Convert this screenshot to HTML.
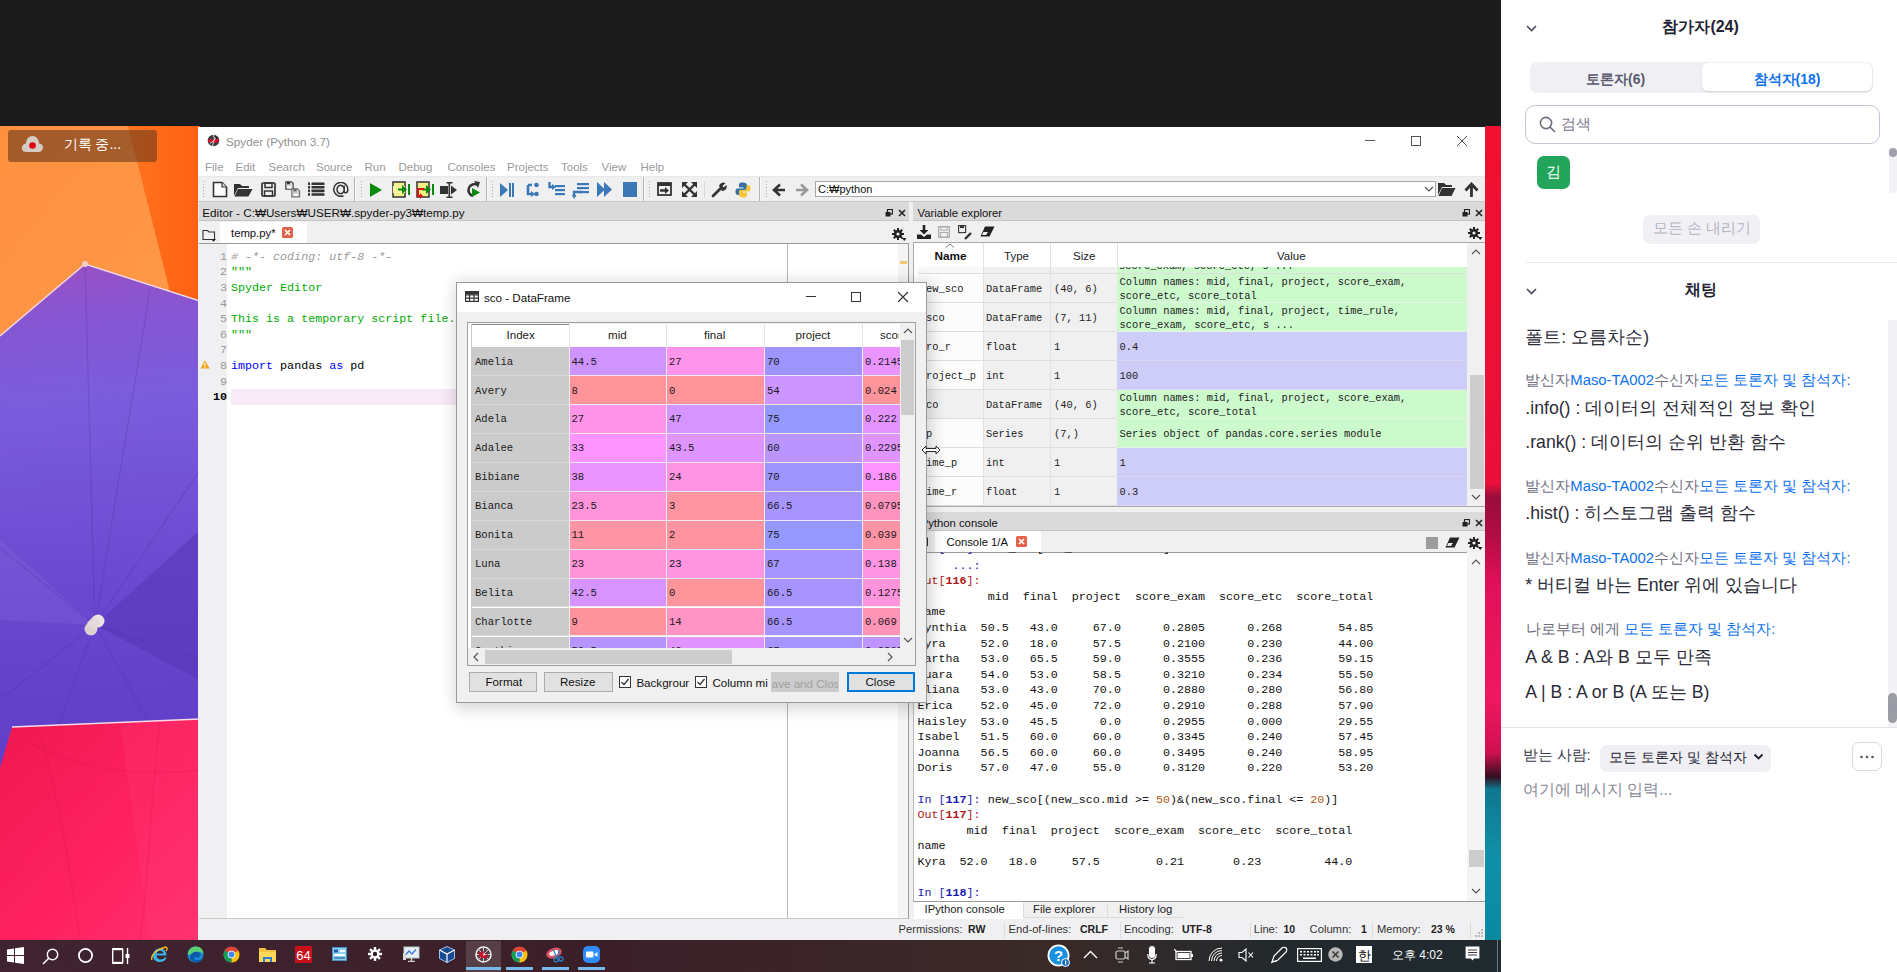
<!DOCTYPE html>
<html><head><meta charset="utf-8">
<style>
*{margin:0;padding:0;box-sizing:border-box}
html,body{width:1897px;height:972px;overflow:hidden;background:#1b1b1b;font-family:"Liberation Sans",sans-serif;position:relative}
.a{position:absolute;line-height:1}
.m{font-family:"Liberation Mono",monospace}
.nw{white-space:pre}
</style></head><body>
<svg class="a" style="left:0;top:126px" width="200" height="814" viewBox="0 126 200 814">
  <defs>
    <linearGradient id="og" x1="0" y1="0" x2="0.3" y2="1">
      <stop offset="0" stop-color="#ff9040"/><stop offset="0.5" stop-color="#ff9a48"/><stop offset="1" stop-color="#ff8a30"/>
    </linearGradient>
    <linearGradient id="og2" x1="0" y1="0" x2="1" y2="0">
      <stop offset="0" stop-color="#ff7420"/><stop offset="1" stop-color="#ff6010"/>
    </linearGradient>
    <linearGradient id="pg" gradientUnits="userSpaceOnUse" x1="0" y1="264" x2="40" y2="740">
      <stop offset="0" stop-color="#9a50c4"/><stop offset="0.13" stop-color="#8656d4"/><stop offset="0.3" stop-color="#7a5ddc"/><stop offset="0.7" stop-color="#6a48d0"/><stop offset="1" stop-color="#6040c8"/>
    </linearGradient>
    <linearGradient id="rg" x1="0" y1="0" x2="1" y2="1">
      <stop offset="0" stop-color="#f01850"/><stop offset="0.6" stop-color="#ff2262"/><stop offset="1" stop-color="#ff3070"/>
    </linearGradient>
  </defs>
  <rect x="0" y="126" width="200" height="814" fill="url(#og)"/>
  <polygon points="128,126 200,126 200,302 172,300" fill="url(#og2)"/>
  <polygon points="0,336 85,264 200,301 200,940 0,940" fill="url(#pg)"/>
  
  <polygon points="200,530 95,625 200,680" fill="#5232b0" opacity="0.45"/>
  <polygon points="0,620 95,625 0,540" fill="#8a70e0" opacity="0.25"/>
  <g stroke="#4a2aa0" stroke-width="1.3" fill="none" opacity="0.22">
    <path d="M95,625 L85,264"/><path d="M95,625 L0,548"/><path d="M95,625 L0,700"/><path d="M95,625 L55,735"/>
    <path d="M95,625 L150,725"/><path d="M95,625 L200,660"/><path d="M95,625 L200,470"/><path d="M95,625 L150,290"/>
  </g>
  <polygon points="0,768 12,727 200,719 200,940 0,940" fill="url(#rg)"/>
  <polygon points="120,722 200,719 200,940 150,940" fill="#ff3a78" opacity="0.25"/>
  <g stroke="#c01040" stroke-width="1.5" fill="none" opacity="0.15">
    <path d="M40,735 C60,800 70,870 80,940"/><path d="M160,722 C150,800 150,870 140,940"/><path d="M12,727 C40,760 120,780 200,770"/>
  </g>
  <polyline points="12,727 200,719" stroke="#f4dce8" stroke-width="1.6" fill="none"/>
  <polyline points="0,336 85,264 200,301" stroke="#f0d8e8" stroke-width="1.4" fill="none"/>
  <circle cx="91" cy="629" r="6.5" fill="#ddd2d2"/><circle cx="98" cy="621" r="6.5" fill="#ece4e4"/><rect x="89" y="618" width="10" height="10" fill="#e4dada" transform="rotate(45 94 623)"/>
  <circle cx="85" cy="264" r="3" fill="#e8d0c8"/>
</svg>
<div class="a" style="left:1485px;top:126px;width:16px;height:814px;background:linear-gradient(#f01030 0%,#e8103a 44%,#9a0c3c 45.5%,#b00c44 50%,#e01058 56%,#f01860 70%,#d01050 77%,#301020 80%,#107890 81.5%,#1090a8 90%,#0a88a0 100%);"></div>
<div class="a" style="left:8.4px;top:130.3px;width:148.2px;height:32px;background:rgba(110,60,30,0.62);border-radius:3px"></div>
<div class="a" style="left:0px;top:940px;width:1501px;height:32px;background:linear-gradient(90deg,#3f2330 0%,#3b1f28 40%,#3a2a28 70%,#23292d 85%,#1f2a30 100%);"></div>
<div class="a" style="left:1501px;top:0px;width:396px;height:972px;background:#fff;"></div>
<div class="a" style="left:198px;top:127px;width:1287px;height:813px;background:#f0f0f0;"></div>
<div class="a" style="left:198px;top:127px;width:1287px;height:49px;background:#fff;"></div>
<svg class="a" style="left:207px;top:134px" width="13" height="13" viewBox="0 0 13 13"><circle cx="6.5" cy="6.5" r="5.8" fill="#3c3c3c"/>
 <path d="M0.8,5.8 C3,4.6 5,5.4 7,5 C9,4.6 10.5,4.2 12.2,5.8 L11.5,8 C9.5,8.8 7.5,9.4 5.5,8.6 C3.5,8 2,8.6 1,8.2 Z" fill="#d0102a"/>
 <path d="M6.5,1 L7.5,6 M9.5,2.5 L7,6.5 M7,6.5 L5.5,12 M7,6.5 L3,9.5" stroke="#e8e8e8" stroke-width="0.9"/>
 <path d="M8,1.5 L11,3.5 L9,5 Z" fill="#111"/></svg>
<div class="a nw" style="left:226px;top:136px;font-size:11.7px;color:#909090;">Spyder (Python 3.7)</div>
<div class="a" style="left:1365px;top:140px;width:10px;height:1px;background:#555;"></div>
<div class="a" style="left:1411px;top:136px;width:10px;height:10px;background:transparent;border:1px solid #555"></div>
<svg class="a" style="left:1456px;top:135px" width="12" height="12" viewBox="0 0 12 12"><path d="M1,1 L11,11 M11,1 L1,11" stroke="#555" stroke-width="1"/></svg>
<div class="a nw" style="left:205px;top:162px;font-size:11.5px;color:#9a9a9a;">File</div>
<div class="a nw" style="left:235.5px;top:162px;font-size:11.5px;color:#9a9a9a;">Edit</div>
<div class="a nw" style="left:268.5px;top:162px;font-size:11.5px;color:#9a9a9a;">Search</div>
<div class="a nw" style="left:316px;top:162px;font-size:11.5px;color:#9a9a9a;">Source</div>
<div class="a nw" style="left:364.5px;top:162px;font-size:11.5px;color:#9a9a9a;">Run</div>
<div class="a nw" style="left:398.5px;top:162px;font-size:11.5px;color:#9a9a9a;">Debug</div>
<div class="a nw" style="left:447.5px;top:162px;font-size:11.5px;color:#9a9a9a;">Consoles</div>
<div class="a nw" style="left:507px;top:162px;font-size:11.5px;color:#9a9a9a;">Projects</div>
<div class="a nw" style="left:561px;top:162px;font-size:11.5px;color:#9a9a9a;">Tools</div>
<div class="a nw" style="left:601.5px;top:162px;font-size:11.5px;color:#9a9a9a;">View</div>
<div class="a nw" style="left:640.5px;top:162px;font-size:11.5px;color:#9a9a9a;">Help</div>
<div class="a" style="left:198px;top:176px;width:1287px;height:26px;background:#f0f0f0;border-top:1px solid #e8e8e8"></div>
<div class="a" style="left:198px;top:201px;width:1287px;height:1px;background:#c8c8c8;"></div>
<svg class="a" style="left:202px;top:181px" width="3" height="18" viewBox="0 0 3 18"><rect x="1" y="0" width="1" height="1" fill="#aaa"/><rect x="1" y="3" width="1" height="1" fill="#aaa"/><rect x="1" y="6" width="1" height="1" fill="#aaa"/><rect x="1" y="9" width="1" height="1" fill="#aaa"/><rect x="1" y="12" width="1" height="1" fill="#aaa"/><rect x="1" y="15" width="1" height="1" fill="#aaa"/></svg>
<svg class="a" style="left:360px;top:181px" width="3" height="18" viewBox="0 0 3 18"><rect x="1" y="0" width="1" height="1" fill="#aaa"/><rect x="1" y="3" width="1" height="1" fill="#aaa"/><rect x="1" y="6" width="1" height="1" fill="#aaa"/><rect x="1" y="9" width="1" height="1" fill="#aaa"/><rect x="1" y="12" width="1" height="1" fill="#aaa"/><rect x="1" y="15" width="1" height="1" fill="#aaa"/></svg>
<svg class="a" style="left:491px;top:181px" width="3" height="18" viewBox="0 0 3 18"><rect x="1" y="0" width="1" height="1" fill="#aaa"/><rect x="1" y="3" width="1" height="1" fill="#aaa"/><rect x="1" y="6" width="1" height="1" fill="#aaa"/><rect x="1" y="9" width="1" height="1" fill="#aaa"/><rect x="1" y="12" width="1" height="1" fill="#aaa"/><rect x="1" y="15" width="1" height="1" fill="#aaa"/></svg>
<svg class="a" style="left:648px;top:181px" width="3" height="18" viewBox="0 0 3 18"><rect x="1" y="0" width="1" height="1" fill="#aaa"/><rect x="1" y="3" width="1" height="1" fill="#aaa"/><rect x="1" y="6" width="1" height="1" fill="#aaa"/><rect x="1" y="9" width="1" height="1" fill="#aaa"/><rect x="1" y="12" width="1" height="1" fill="#aaa"/><rect x="1" y="15" width="1" height="1" fill="#aaa"/></svg>
<svg class="a" style="left:765px;top:181px" width="3" height="18" viewBox="0 0 3 18"><rect x="1" y="0" width="1" height="1" fill="#aaa"/><rect x="1" y="3" width="1" height="1" fill="#aaa"/><rect x="1" y="6" width="1" height="1" fill="#aaa"/><rect x="1" y="9" width="1" height="1" fill="#aaa"/><rect x="1" y="12" width="1" height="1" fill="#aaa"/><rect x="1" y="15" width="1" height="1" fill="#aaa"/></svg>
<div class="a" style="left:354px;top:177px;width:1px;height:24px;background:#b4b4b4;"></div>
<div class="a" style="left:355px;top:177px;width:1px;height:24px;background:#fafafa;"></div>
<div class="a" style="left:486px;top:177px;width:1px;height:24px;background:#b4b4b4;"></div>
<div class="a" style="left:487px;top:177px;width:1px;height:24px;background:#fafafa;"></div>
<div class="a" style="left:643px;top:177px;width:1px;height:24px;background:#b4b4b4;"></div>
<div class="a" style="left:644px;top:177px;width:1px;height:24px;background:#fafafa;"></div>
<div class="a" style="left:759px;top:177px;width:1px;height:24px;background:#b4b4b4;"></div>
<div class="a" style="left:760px;top:177px;width:1px;height:24px;background:#fafafa;"></div>
<div class="a" style="left:704px;top:182px;width:1px;height:16px;background:#d8d8d8;"></div>
<svg class="a" style="left:212px;top:181px" width="16" height="17" viewBox="0 0 16 17"><path d="M1.5,1.5 H10 L14.5,6 V15.5 H1.5 Z" fill="#fff" stroke="#333" stroke-width="1.6"/><path d="M10,1.5 V6 H14.5" fill="#ddd" stroke="#333" stroke-width="1.2"/></svg>
<svg class="a" style="left:234px;top:183px" width="19" height="14" viewBox="0 0 19 14"><path d="M0,1 H6 L8,3 H15 V5 H4 L0,13 Z" fill="#333"/><path d="M4,6 H18.5 L14.5,13.5 H0.5 Z" fill="#333"/></svg>
<svg class="a" style="left:261px;top:182px" width="15" height="15" viewBox="0 0 15 15"><rect x="1" y="1" width="13" height="13" rx="1" fill="none" stroke="#333" stroke-width="1.7"/><rect x="4" y="1" width="7" height="4.5" fill="none" stroke="#333" stroke-width="1.5"/><rect x="3.5" y="9" width="8" height="5" fill="none" stroke="#333" stroke-width="1.5"/></svg>
<svg class="a" style="left:285px;top:181px" width="16" height="17" viewBox="0 0 16 17"><path d="M0.8,0.8 H6.5 L8.2,2.5 V8.2 H0.8 Z" fill="#ddd" stroke="#444" stroke-width="1.2"/><rect x="2" y="0.8" width="3" height="2.5" fill="#333"/><rect x="2.2" y="5.5" width="4.5" height="2" fill="#fff"/><path d="M6.8,7.8 H12.5 L14.6,9.9 V15.8 H6.8 Z" fill="#ccc" stroke="#777" stroke-width="1.2"/><rect x="8.5" y="7.8" width="3" height="2.5" fill="#666"/><rect x="8.5" y="12.8" width="4.5" height="2" fill="#fff"/></svg>
<svg class="a" style="left:308px;top:182px" width="17" height="15" viewBox="0 0 17 15"><g fill="#333"><rect x="0" y="0.4" width="2" height="2.6"/><rect x="0" y="4" width="2" height="2.6"/><rect x="0" y="7.6" width="2" height="2.6"/><rect x="0" y="11.2" width="2" height="2.6"/><rect x="3.5" y="0.4" width="13" height="2.6" rx="0.6"/><rect x="3.5" y="4" width="13" height="2.6" rx="0.6"/><rect x="3.5" y="7.6" width="13" height="2.6" rx="0.6"/><rect x="3.5" y="11.2" width="13" height="2.6" rx="0.6"/></g></svg>
<svg class="a" style="left:333px;top:182px" width="16" height="15" viewBox="0 0 16 15"><path d="M11.2,7.5 A3.6,4.2 0 1 1 11.2,7.4 M11.2,3.5 V9.5 C11.2,11.5 14.8,11.5 14.8,7.5 A7,7 0 1 0 10.5,13.8" fill="none" stroke="#333" stroke-width="1.5"/></svg>
<svg class="a" style="left:369px;top:182px" width="14" height="16" viewBox="0 0 14 16"><path d="M1,1 L13,8 L1,15 Z" fill="#0a8a0a"/></svg>
<svg class="a" style="left:392px;top:181px" width="19" height="17" viewBox="0 0 19 17"><rect x="1" y="1" width="12" height="15" fill="#f4f08a" stroke="#333" stroke-width="1.5"/><rect x="1" y="5" width="12" height="7" fill="#f8f4a0"/><path d="M10,4 L15,8.5 L10,13 Z" fill="#0a8a0a"/><rect x="16" y="3" width="2" height="11" fill="#0a8a0a"/><path d="M6,8.5 H12" stroke="#0a8a0a" stroke-width="2"/></svg>
<svg class="a" style="left:416px;top:181px" width="19" height="18" viewBox="0 0 19 18"><rect x="1" y="1" width="12" height="15" fill="#f4f08a" stroke="#333" stroke-width="1.5"/><path d="M10,4 L15,8.5 L10,13 Z" fill="#0a8a0a"/><rect x="16" y="3" width="2" height="11" fill="#0a8a0a"/><path d="M6,8.5 H12" stroke="#0a8a0a" stroke-width="2"/><path d="M8,8 H2 V15 H5" stroke="#e01010" stroke-width="2" fill="none"/><path d="M4,12 L7,15 L4,18 Z" fill="#e01010"/></svg>
<svg class="a" style="left:440px;top:182px" width="18" height="16" viewBox="0 0 18 16"><rect x="0" y="4" width="8" height="8" fill="#333"/><rect x="8.5" y="0" width="1.6" height="16" fill="#333"/><rect x="6.5" y="0" width="6" height="1.5" fill="#333"/><rect x="6.5" y="14.5" width="6" height="1.5" fill="#333"/><path d="M11,3.5 L17,8 L11,12.5 Z" fill="#333"/></svg>
<svg class="a" style="left:465px;top:181px" width="16" height="17" viewBox="0 0 16 17"><path d="M12.5,4 A6,6 0 1 0 8,15" fill="none" stroke="#333" stroke-width="2.4"/><path d="M9,0 L15,1 L13,7 Z" fill="#333"/><path d="M7,7 L15,11.5 L7,16 Z" fill="#0a8a0a"/></svg>
<svg class="a" style="left:500px;top:182px" width="14" height="16" viewBox="0 0 14 16"><path d="M0,1 L8,8 L0,15 Z" fill="#3a78b8"/><rect x="9" y="1" width="2" height="14" fill="#3a78b8"/><rect x="12" y="1" width="2" height="14" fill="#3a78b8"/></svg>
<svg class="a" style="left:526px;top:182px" width="13" height="15" viewBox="0 0 13 15"><path d="M2,3 H6 M2,3 V12 H6" stroke="#3a78b8" stroke-width="2.6" fill="none"/><circle cx="10.5" cy="3" r="2.3" fill="#3a78b8"/><circle cx="10.5" cy="12" r="2.3" fill="#3a78b8"/><path d="M5,9 L9,12 L5,15 Z" fill="#3a78b8"/></svg>
<svg class="a" style="left:548px;top:181px" width="18" height="15" viewBox="0 0 18 15"><path d="M1.5,1 V6 H5" stroke="#3a78b8" stroke-width="2.4" fill="none"/><path d="M4,3 L8,6 L4,9 Z" fill="#3a78b8"/><rect x="7" y="4" width="10" height="2.2" fill="#3a78b8"/><rect x="7" y="8" width="10" height="2.2" fill="#3a78b8"/><rect x="7" y="12" width="10" height="2.2" fill="#3a78b8"/></svg>
<svg class="a" style="left:572px;top:183px" width="18" height="16" viewBox="0 0 18 16"><rect x="5" y="0" width="12" height="2.2" fill="#3a78b8"/><rect x="5" y="4" width="12" height="2.2" fill="#3a78b8"/><rect x="7" y="8" width="10" height="2.2" fill="#3a78b8"/><path d="M10,9 H2 V14" stroke="#3a78b8" stroke-width="2.4" fill="none"/><path d="M0,12 L2,16 L4.5,12 Z" fill="#3a78b8"/></svg>
<svg class="a" style="left:597px;top:182px" width="16" height="15" viewBox="0 0 16 15"><path d="M0,0 L8,7.5 L0,15 Z M7,0 L15,7.5 L7,15 Z" fill="#3a78b8"/></svg>
<div class="a" style="left:623px;top:182px;width:14px;height:15px;background:#3a78b8;"></div>
<svg class="a" style="left:657px;top:182px" width="15" height="14" viewBox="0 0 15 14"><rect x="1" y="1" width="13" height="12" fill="none" stroke="#333" stroke-width="1.8"/><rect x="1" y="1" width="13" height="3" fill="#333"/><path d="M3,8.5 H9" stroke="#333" stroke-width="2.5"/><path d="M8,5 L12,8.5 L8,12 Z" fill="#333"/></svg>
<svg class="a" style="left:682px;top:182px" width="15" height="15" viewBox="0 0 15 15"><path d="M2,2 L13,13 M13,2 L2,13" stroke="#333" stroke-width="2.4"/><path d="M0,0 H6 L0,6 Z M15,0 H9 L15,6 Z M0,15 H6 L0,9 Z M15,15 H9 L15,9 Z" fill="#333"/></svg>
<svg class="a" style="left:711px;top:182px" width="16" height="16" viewBox="0 0 16 16"><path d="M2,14 L9,7" stroke="#333" stroke-width="2.8" stroke-linecap="round"/><path d="M8,4 A4.5,4.5 0 0 1 14.5,1 L11.5,4 L12.5,5.5 L15.5,3 A4.5,4.5 0 0 1 11,9 Z" fill="#333"/></svg>
<svg class="a" style="left:735px;top:182px" width="16" height="16" viewBox="0 0 16 16"><path d="M8,0.5 C4,0.5 4,2 4,3.5 V5.5 H8.5 V6.5 H2.5 C0.5,6.5 0.5,9 0.5,10 C0.5,12 1.5,13 3,13 H4.5 V10.5 C4.5,9 5.5,8 7,8 H10.5 C11.5,8 12,7.5 12,6.5 V3 C12,1.5 10.5,0.5 8,0.5 Z" fill="#3572a5"/><path d="M8,15.5 C12,15.5 12,14 12,12.5 V10.5 H7.5 V9.5 H13.5 C15.5,9.5 15.5,7 15.5,6 C15.5,4 14.5,3 13,3 H11.5 V5.5 C11.5,7 10.5,8 9,8 H5.5 C4.5,8 4,8.5 4,9.5 V13 C4,14.5 5.5,15.5 8,15.5 Z" fill="#f4c430"/></svg>
<svg class="a" style="left:772px;top:183px" width="14" height="14" viewBox="0 0 14 14"><path d="M13,7 H3 M8,1.5 L2,7 L8,12.5" stroke="#333" stroke-width="2.6" fill="none"/></svg>
<svg class="a" style="left:795px;top:183px" width="14" height="14" viewBox="0 0 14 14"><path d="M1,7 H11 M6,1.5 L12,7 L6,12.5" stroke="#999" stroke-width="2.6" fill="none"/></svg>
<div class="a" style="left:815px;top:181px;width:621px;height:16px;background:#fff;border:1px solid #a8a8a8"></div>
<div class="a nw" style="left:818px;top:183.5px;font-size:11px;color:#111;">C:₩python</div>
<svg class="a" style="left:1424px;top:185px" width="10" height="8" viewBox="0 0 10 8"><path d="M1,2 L5,6 L9,2" stroke="#555" stroke-width="1.2" fill="none"/></svg>
<svg class="a" style="left:1438px;top:182px" width="18" height="15" viewBox="0 0 18 15"><path d="M0,1 H6 L8,3 H14 V5 H4 L0,13 Z" fill="#333"/><path d="M4,6 H17.5 L13.5,14 H0.5 Z" fill="#333"/></svg>
<svg class="a" style="left:1464px;top:182px" width="15" height="15" viewBox="0 0 15 15"><path d="M7.5,15 V3 M1.5,8.5 L7.5,2 L13.5,8.5" stroke="#333" stroke-width="2.8" fill="none"/></svg>
<div class="a" style="left:199px;top:202px;width:710px;height:19px;background:#dadada;border-bottom:1px solid #c4c4c4"></div>
<div class="a nw" style="left:202.3px;top:207px;font-size:11.7px;color:#111;">Editor - C:₩Users₩USER₩.spyder-py3₩temp.py</div>
<svg class="a" style="left:885px;top:209px" width="8" height="8" viewBox="0 0 8 8"><rect x="2.5" y="0.5" width="5" height="4.5" fill="none" stroke="#222" stroke-width="1.2"/><rect x="0.5" y="3" width="5" height="4.5" fill="#222"/></svg>
<svg class="a" style="left:898px;top:209px" width="8" height="8" viewBox="0 0 8 8"><path d="M1,1 L7,7 M7,1 L1,7" stroke="#222" stroke-width="1.6"/></svg>
<svg class="a" style="left:202px;top:229px" width="15" height="13" viewBox="0 0 15 13"><path d="M1,1.5 H5.5 L7,3 H12.5 V10.5 H1 Z" fill="none" stroke="#333" stroke-width="1.1"/><path d="M9,10 L14,10 L11.5,12.8 Z" fill="#222"/></svg>
<div class="a" style="left:220px;top:222px;width:87px;height:22px;background:#fff;"></div>
<div class="a nw" style="left:231px;top:228px;font-size:11.3px;color:#111;">temp.py*</div>
<svg class="a" style="left:282px;top:227px" width="11" height="11" viewBox="0 0 11 11"><rect x="0" y="0" width="11" height="11" rx="1.5" fill="#e5604a"/><path d="M3,3 L8,8 M8,3 L3,8" stroke="#fff" stroke-width="1.6"/></svg>
<svg class="a" style="left:891px;top:227px" width="16" height="15" viewBox="0 0 16 15"><g fill="#222"><circle cx="7" cy="7" r="4"/><rect x="6" y="1" width="2" height="12"/><rect x="1" y="6" width="12" height="2"/><rect x="6" y="1" width="2" height="12" transform="rotate(45 7 7)"/><rect x="6" y="1" width="2" height="12" transform="rotate(-45 7 7)"/></g><circle cx="7" cy="7" r="1.6" fill="#f0f0f0"/><path d="M11,11 H15.5 L13.25,14 Z" fill="#111"/></svg>
<div class="a" style="left:199px;top:243px;width:710px;height:1px;background:#9a9a9a;"></div>
<div class="a" style="left:199px;top:244px;width:710px;height:674px;background:#fff;"></div>
<div class="a" style="left:199px;top:244px;width:28px;height:674px;background:#f0eff2;"></div>
<div class="a" style="left:199px;top:918px;width:710px;height:1px;background:#c8c8c8;"></div>
<div class="a" style="left:787px;top:244px;width:1px;height:674px;background:#b8b8b8;"></div>
<div class="a" style="left:898px;top:244px;width:10px;height:674px;background:#f4f4f4;"></div>
<div class="a" style="left:900px;top:261px;width:7px;height:3px;background:#f0c870;"></div>
<div class="a" style="left:908px;top:244px;width:1px;height:675px;background:#9a9a9a;"></div>
<div class="a" style="left:231px;top:389px;width:667px;height:16px;background:#f7ebf5;"></div>
<div class="a nw" style="left:220px;top:251.8px;font-size:11.7px;color:#999;font-family:'Liberation Mono'">1</div>
<div class="a nw" style="left:220px;top:267.40000000000003px;font-size:11.7px;color:#999;font-family:'Liberation Mono'">2</div>
<div class="a nw" style="left:220px;top:283.0px;font-size:11.7px;color:#999;font-family:'Liberation Mono'">3</div>
<div class="a nw" style="left:220px;top:298.6px;font-size:11.7px;color:#999;font-family:'Liberation Mono'">4</div>
<div class="a nw" style="left:220px;top:314.2px;font-size:11.7px;color:#999;font-family:'Liberation Mono'">5</div>
<div class="a nw" style="left:220px;top:329.8px;font-size:11.7px;color:#999;font-family:'Liberation Mono'">6</div>
<div class="a nw" style="left:220px;top:345.4px;font-size:11.7px;color:#999;font-family:'Liberation Mono'">7</div>
<div class="a nw" style="left:220px;top:361.0px;font-size:11.7px;color:#999;font-family:'Liberation Mono'">8</div>
<div class="a nw" style="left:220px;top:376.6px;font-size:11.7px;color:#999;font-family:'Liberation Mono'">9</div>
<div class="a nw" style="left:213px;top:392.20000000000005px;font-size:11.7px;color:#000;font-weight:bold;font-family:'Liberation Mono'">10</div>
<div class="a nw m" style="left:231px;top:251.8px;font-size:11.7px"><i style="color:#999">#&nbsp;-*-&nbsp;coding:&nbsp;utf-8&nbsp;-*-</i></div>
<div class="a nw m" style="left:231px;top:267.40000000000003px;font-size:11.7px"><span style="color:#00aa00">"""</span></div>
<div class="a nw m" style="left:231px;top:283.0px;font-size:11.7px"><span style="color:#00aa00">Spyder Editor</span></div>
<div class="a nw m" style="left:231px;top:314.2px;font-size:11.7px"><span style="color:#00aa00">This is a temporary script file.</span></div>
<div class="a nw m" style="left:231px;top:329.8px;font-size:11.7px"><span style="color:#00aa00">"""</span></div>
<div class="a nw m" style="left:231px;top:361.0px;font-size:11.7px"><span style="color:#0000ff">import</span> pandas <span style="color:#0000ff">as</span> pd</div>
<svg class="a" style="left:200px;top:360px" width="10" height="9" viewBox="0 0 10 9"><path d="M5,0.5 L9.5,8.5 H0.5 Z" fill="#f0a010"/><rect x="4.4" y="3" width="1.2" height="3" fill="#fff"/><rect x="4.4" y="6.6" width="1.2" height="1.2" fill="#fff"/></svg>
<div class="a" style="left:198px;top:919px;width:1287px;height:21px;background:#f0f0f2;"></div>
<div class="a" style="left:913px;top:202px;width:572px;height:19px;background:#dadada;border-bottom:1px solid #c4c4c4"></div>
<div class="a nw" style="left:917.5px;top:207.5px;font-size:11.3px;color:#111;">Variable explorer</div>
<svg class="a" style="left:1462px;top:209px" width="8" height="8" viewBox="0 0 8 8"><rect x="2.5" y="0.5" width="5" height="4.5" fill="none" stroke="#222" stroke-width="1.2"/><rect x="0.5" y="3" width="5" height="4.5" fill="#222"/></svg>
<svg class="a" style="left:1475px;top:209px" width="8" height="8" viewBox="0 0 8 8"><path d="M1,1 L7,7 M7,1 L1,7" stroke="#222" stroke-width="1.6"/></svg>
<svg class="a" style="left:1467px;top:226px" width="16" height="15" viewBox="0 0 16 15"><g fill="#222"><circle cx="7" cy="7" r="4"/><rect x="6" y="1" width="2" height="12"/><rect x="1" y="6" width="12" height="2"/><rect x="6" y="1" width="2" height="12" transform="rotate(45 7 7)"/><rect x="6" y="1" width="2" height="12" transform="rotate(-45 7 7)"/></g><circle cx="7" cy="7" r="1.6" fill="#f0f0f0"/><path d="M11,11 H15.5 L13.25,14 Z" fill="#111"/></svg>
<svg class="a" style="left:917px;top:225px" width="14" height="14" viewBox="0 0 14 14"><path d="M7,0 V7" stroke="#222" stroke-width="2.6"/><path d="M2.5,5 L7,9.5 L11.5,5 Z" fill="#222"/><path d="M0,9.5 H4 L7,12 L10,9.5 H14 V14 H0 Z" fill="#222"/></svg>
<svg class="a" style="left:938px;top:226px" width="12" height="12" viewBox="0 0 12 12"><rect x="0.7" y="0.7" width="10.6" height="10.6" fill="none" stroke="#aaa" stroke-width="1.2"/><rect x="3" y="0.7" width="6" height="3.5" fill="none" stroke="#aaa" stroke-width="1"/><rect x="2.5" y="6.5" width="7" height="4.8" fill="none" stroke="#aaa" stroke-width="1"/></svg>
<svg class="a" style="left:958px;top:225px" width="15" height="15" viewBox="0 0 15 15"><rect x="0.6" y="0.6" width="7" height="7" fill="none" stroke="#333" stroke-width="1.1"/><rect x="2" y="0.6" width="4" height="2.5" fill="#333"/><path d="M7,14 L13,8" stroke="#333" stroke-width="2.4"/></svg>
<svg class="a" style="left:980px;top:226px" width="15" height="11" viewBox="0 0 15 11"><path d="M5,0.5 H14.5 L9.5,10.5 H0.5 Z" fill="#222"/><path d="M3.5,6 H8 L6,9 H2 Z" fill="#f0f0f0"/></svg>
<div class="a" style="left:913px;top:242px;width:572px;height:265px;background:#fff;border:1px solid #a8a8a8"></div>
<div class="a" style="left:918px;top:243px;width:549px;height:24px;background:#fff;"></div>
<div class="a" style="left:983px;top:243px;width:1px;height:263px;background:#e2e2e2;"></div>
<div class="a" style="left:1050px;top:243px;width:1px;height:263px;background:#e2e2e2;"></div>
<div class="a" style="left:1116.5px;top:243px;width:1px;height:24px;background:#e2e2e2;"></div>
<div class="a nw" style="left:934.5px;top:250.5px;font-size:11.8px;color:#111;font-weight:bold">Name</div>
<svg class="a" style="left:945px;top:243px" width="10" height="5" viewBox="0 0 10 5"><path d="M1,4.5 L5,1 L9,4.5" stroke="#777" stroke-width="1" fill="none"/></svg>
<div class="a nw" style="left:1004px;top:250.5px;font-size:11.5px;color:#222;">Type</div>
<div class="a nw" style="left:1073px;top:250.5px;font-size:11.5px;color:#222;">Size</div>
<div class="a nw" style="left:1277px;top:250.5px;font-size:11.5px;color:#222;">Value</div>
<div class="a" style="left:918px;top:267px;width:65px;height:7px;background:#f8f8f8;"></div>
<div class="a" style="left:984px;top:267px;width:66px;height:7px;background:#f0f0f0;"></div>
<div class="a" style="left:1051px;top:267px;width:66px;height:7px;background:#f0f0f0;"></div>
<div class="a" style="left:1117px;top:267px;width:350px;height:7px;background:#ccfacc;"></div>
<div class="a" style="left:1117px;top:267px;width:350px;height:7px;overflow:hidden"><div class="a nw m" style="left:2px;top:-6px;font-size:10.4px;color:#222">score_exam, score_etc, s ...</div></div>
<div class="a" style="left:918px;top:273px;width:549px;height:1px;background:#dedede;"></div>
<div class="a" style="left:918px;top:274px;width:65px;height:29px;background:#fcfcfc;"></div>
<div class="a" style="left:984px;top:274px;width:66px;height:29px;background:#f0f0f0;"></div>
<div class="a" style="left:1051px;top:274px;width:66px;height:29px;background:#f0f0f0;"></div>
<div class="a" style="left:1117px;top:274px;width:350px;height:29px;background:#ccfacc;"></div>
<div class="a" style="left:918px;top:302px;width:549px;height:1px;background:#dedede;"></div>
<div class="a" style="left:1117px;top:302px;width:350px;height:1px;background:#e4f6e4;"></div>
<div class="a nw" style="left:926px;top:283.5px;font-size:10.4px;color:#222;font-family:'Liberation Mono'">ew_sco</div>
<div class="a nw" style="left:986px;top:283.5px;font-size:10.4px;color:#222;font-family:'Liberation Mono'">DataFrame</div>
<div class="a nw" style="left:1054px;top:283.5px;font-size:10.4px;color:#222;font-family:'Liberation Mono'">(40, 6)</div>
<div class="a nw" style="left:1119.5px;top:277px;font-size:10.4px;color:#222;font-family:'Liberation Mono'">Column names: mid, final, project, score_exam,</div>
<div class="a nw" style="left:1119.5px;top:291.2px;font-size:10.4px;color:#222;font-family:'Liberation Mono'">score_etc, score_total</div>
<div class="a" style="left:918px;top:303px;width:65px;height:29px;background:#fcfcfc;"></div>
<div class="a" style="left:984px;top:303px;width:66px;height:29px;background:#f0f0f0;"></div>
<div class="a" style="left:1051px;top:303px;width:66px;height:29px;background:#f0f0f0;"></div>
<div class="a" style="left:1117px;top:303px;width:350px;height:29px;background:#ccfacc;"></div>
<div class="a" style="left:918px;top:331px;width:549px;height:1px;background:#dedede;"></div>
<div class="a" style="left:1117px;top:331px;width:350px;height:1px;background:#e4f6e4;"></div>
<div class="a nw" style="left:926px;top:312.5px;font-size:10.4px;color:#222;font-family:'Liberation Mono'">sco</div>
<div class="a nw" style="left:986px;top:312.5px;font-size:10.4px;color:#222;font-family:'Liberation Mono'">DataFrame</div>
<div class="a nw" style="left:1054px;top:312.5px;font-size:10.4px;color:#222;font-family:'Liberation Mono'">(7, 11)</div>
<div class="a nw" style="left:1119.5px;top:306px;font-size:10.4px;color:#222;font-family:'Liberation Mono'">Column names: mid, final, project, time_rule,</div>
<div class="a nw" style="left:1119.5px;top:320.2px;font-size:10.4px;color:#222;font-family:'Liberation Mono'">score_exam, score_etc, s ...</div>
<div class="a" style="left:918px;top:332px;width:65px;height:29px;background:#fcfcfc;"></div>
<div class="a" style="left:984px;top:332px;width:66px;height:29px;background:#f0f0f0;"></div>
<div class="a" style="left:1051px;top:332px;width:66px;height:29px;background:#f0f0f0;"></div>
<div class="a" style="left:1117px;top:332px;width:350px;height:29px;background:#cdcdf8;"></div>
<div class="a" style="left:918px;top:360px;width:549px;height:1px;background:#dedede;"></div>
<div class="a" style="left:1117px;top:360px;width:350px;height:1px;background:#d8d8f4;"></div>
<div class="a nw" style="left:926px;top:341.5px;font-size:10.4px;color:#222;font-family:'Liberation Mono'">ro_r</div>
<div class="a nw" style="left:986px;top:341.5px;font-size:10.4px;color:#222;font-family:'Liberation Mono'">float</div>
<div class="a nw" style="left:1054px;top:341.5px;font-size:10.4px;color:#222;font-family:'Liberation Mono'">1</div>
<div class="a nw" style="left:1119.5px;top:341.5px;font-size:10.4px;color:#222;font-family:'Liberation Mono'">0.4</div>
<div class="a" style="left:918px;top:361px;width:65px;height:29px;background:#fcfcfc;"></div>
<div class="a" style="left:984px;top:361px;width:66px;height:29px;background:#f0f0f0;"></div>
<div class="a" style="left:1051px;top:361px;width:66px;height:29px;background:#f0f0f0;"></div>
<div class="a" style="left:1117px;top:361px;width:350px;height:29px;background:#cdcdf8;"></div>
<div class="a" style="left:918px;top:389px;width:549px;height:1px;background:#dedede;"></div>
<div class="a" style="left:1117px;top:389px;width:350px;height:1px;background:#d8d8f4;"></div>
<div class="a nw" style="left:926px;top:370.5px;font-size:10.4px;color:#222;font-family:'Liberation Mono'">roject_p</div>
<div class="a nw" style="left:986px;top:370.5px;font-size:10.4px;color:#222;font-family:'Liberation Mono'">int</div>
<div class="a nw" style="left:1054px;top:370.5px;font-size:10.4px;color:#222;font-family:'Liberation Mono'">1</div>
<div class="a nw" style="left:1119.5px;top:370.5px;font-size:10.4px;color:#222;font-family:'Liberation Mono'">100</div>
<div class="a" style="left:918px;top:390px;width:65px;height:29px;background:#f0f0f0;"></div>
<div class="a" style="left:984px;top:390px;width:66px;height:29px;background:#f0f0f0;"></div>
<div class="a" style="left:1051px;top:390px;width:66px;height:29px;background:#f0f0f0;"></div>
<div class="a" style="left:1117px;top:390px;width:350px;height:29px;background:#ccfacc;"></div>
<div class="a" style="left:918px;top:418px;width:549px;height:1px;background:#dedede;"></div>
<div class="a" style="left:1117px;top:418px;width:350px;height:1px;background:#e4f6e4;"></div>
<div class="a nw" style="left:926px;top:399.5px;font-size:10.4px;color:#222;font-family:'Liberation Mono'">co</div>
<div class="a nw" style="left:986px;top:399.5px;font-size:10.4px;color:#222;font-family:'Liberation Mono'">DataFrame</div>
<div class="a nw" style="left:1054px;top:399.5px;font-size:10.4px;color:#222;font-family:'Liberation Mono'">(40, 6)</div>
<div class="a nw" style="left:1119.5px;top:393px;font-size:10.4px;color:#222;font-family:'Liberation Mono'">Column names: mid, final, project, score_exam,</div>
<div class="a nw" style="left:1119.5px;top:407.2px;font-size:10.4px;color:#222;font-family:'Liberation Mono'">score_etc, score_total</div>
<div class="a" style="left:918px;top:419px;width:65px;height:29px;background:#fcfcfc;"></div>
<div class="a" style="left:984px;top:419px;width:66px;height:29px;background:#f0f0f0;"></div>
<div class="a" style="left:1051px;top:419px;width:66px;height:29px;background:#f0f0f0;"></div>
<div class="a" style="left:1117px;top:419px;width:350px;height:29px;background:#ccfacc;"></div>
<div class="a" style="left:918px;top:447px;width:549px;height:1px;background:#dedede;"></div>
<div class="a" style="left:1117px;top:447px;width:350px;height:1px;background:#e4f6e4;"></div>
<div class="a nw" style="left:926px;top:428.5px;font-size:10.4px;color:#222;font-family:'Liberation Mono'">p</div>
<div class="a nw" style="left:986px;top:428.5px;font-size:10.4px;color:#222;font-family:'Liberation Mono'">Series</div>
<div class="a nw" style="left:1054px;top:428.5px;font-size:10.4px;color:#222;font-family:'Liberation Mono'">(7,)</div>
<div class="a nw" style="left:1119.5px;top:428.5px;font-size:10.4px;color:#222;font-family:'Liberation Mono'">Series object of pandas.core.series module</div>
<div class="a" style="left:918px;top:448px;width:65px;height:29px;background:#fcfcfc;"></div>
<div class="a" style="left:984px;top:448px;width:66px;height:29px;background:#f0f0f0;"></div>
<div class="a" style="left:1051px;top:448px;width:66px;height:29px;background:#f0f0f0;"></div>
<div class="a" style="left:1117px;top:448px;width:350px;height:29px;background:#cdcdf8;"></div>
<div class="a" style="left:918px;top:476px;width:549px;height:1px;background:#dedede;"></div>
<div class="a" style="left:1117px;top:476px;width:350px;height:1px;background:#d8d8f4;"></div>
<div class="a nw" style="left:926px;top:457.5px;font-size:10.4px;color:#222;font-family:'Liberation Mono'">ime_p</div>
<div class="a nw" style="left:986px;top:457.5px;font-size:10.4px;color:#222;font-family:'Liberation Mono'">int</div>
<div class="a nw" style="left:1054px;top:457.5px;font-size:10.4px;color:#222;font-family:'Liberation Mono'">1</div>
<div class="a nw" style="left:1119.5px;top:457.5px;font-size:10.4px;color:#222;font-family:'Liberation Mono'">1</div>
<div class="a" style="left:918px;top:477px;width:65px;height:29px;background:#fcfcfc;"></div>
<div class="a" style="left:984px;top:477px;width:66px;height:29px;background:#f0f0f0;"></div>
<div class="a" style="left:1051px;top:477px;width:66px;height:29px;background:#f0f0f0;"></div>
<div class="a" style="left:1117px;top:477px;width:350px;height:29px;background:#cdcdf8;"></div>
<div class="a" style="left:918px;top:505px;width:549px;height:1px;background:#dedede;"></div>
<div class="a" style="left:1117px;top:505px;width:350px;height:1px;background:#d8d8f4;"></div>
<div class="a nw" style="left:926px;top:486.5px;font-size:10.4px;color:#222;font-family:'Liberation Mono'">ime_r</div>
<div class="a nw" style="left:986px;top:486.5px;font-size:10.4px;color:#222;font-family:'Liberation Mono'">float</div>
<div class="a nw" style="left:1054px;top:486.5px;font-size:10.4px;color:#222;font-family:'Liberation Mono'">1</div>
<div class="a nw" style="left:1119.5px;top:486.5px;font-size:10.4px;color:#222;font-family:'Liberation Mono'">0.3</div>
<div class="a" style="left:1467px;top:243px;width:18px;height:263px;background:#f0f0f0;"></div>
<svg class="a" style="left:1471px;top:248px" width="10" height="7" viewBox="0 0 10 7"><path d="M1,6 L5,2 L9,6" stroke="#555" stroke-width="1.2" fill="none"/></svg>
<div class="a" style="left:1469.5px;top:375px;width:14.5px;height:114px;background:#cdcdcd;"></div>
<svg class="a" style="left:1471px;top:494px" width="10" height="7" viewBox="0 0 10 7"><path d="M1,1 L5,5 L9,1" stroke="#555" stroke-width="1.2" fill="none"/></svg>
<div class="a" style="left:913px;top:512px;width:572px;height:19px;background:#dadada;border-bottom:1px solid #c4c4c4"></div>
<div class="a nw" style="left:917.5px;top:517.5px;font-size:11.3px;color:#111;">IPython console</div>
<svg class="a" style="left:1462px;top:519px" width="8" height="8" viewBox="0 0 8 8"><rect x="2.5" y="0.5" width="5" height="4.5" fill="none" stroke="#222" stroke-width="1.2"/><rect x="0.5" y="3" width="5" height="4.5" fill="#222"/></svg>
<svg class="a" style="left:1475px;top:519px" width="8" height="8" viewBox="0 0 8 8"><path d="M1,1 L7,7 M7,1 L1,7" stroke="#222" stroke-width="1.6"/></svg>
<svg class="a" style="left:915px;top:535px" width="13" height="13" viewBox="0 0 13 13"><path d="M1,1.5 H5.5 L7,3 H12.5 V10.5 H1 Z" fill="none" stroke="#333" stroke-width="1.1"/><path d="M9,10 L13,10 L11,12.8 Z" fill="#222"/></svg>
<div class="a" style="left:935px;top:531px;width:106px;height:21px;background:#fff;"></div>
<div class="a nw" style="left:946.5px;top:537px;font-size:11.3px;color:#111;">Console 1/A</div>
<svg class="a" style="left:1016px;top:536px" width="11" height="11" viewBox="0 0 11 11"><rect x="0" y="0" width="11" height="11" rx="1.5" fill="#e5604a"/><path d="M3,3 L8,8 M8,3 L3,8" stroke="#fff" stroke-width="1.6"/></svg>
<div class="a" style="left:1426px;top:537px;width:11.5px;height:11.5px;background:#9c9c9c;"></div>
<svg class="a" style="left:1445px;top:537px" width="15" height="11" viewBox="0 0 15 11"><path d="M5,0.5 H14.5 L9.5,10.5 H0.5 Z" fill="#222"/><path d="M3.5,6 H8 L6,9 H2 Z" fill="#f0f0f0"/></svg>
<svg class="a" style="left:1467px;top:536px" width="16" height="15" viewBox="0 0 16 15"><g fill="#222"><circle cx="7" cy="7" r="4"/><rect x="6" y="1" width="2" height="12"/><rect x="1" y="6" width="12" height="2"/><rect x="6" y="1" width="2" height="12" transform="rotate(45 7 7)"/><rect x="6" y="1" width="2" height="12" transform="rotate(-45 7 7)"/></g><circle cx="7" cy="7" r="1.6" fill="#f0f0f0"/><path d="M11,11 H15.5 L13.25,14 Z" fill="#111"/></svg>
<div class="a" style="left:913px;top:552px;width:572px;height:350px;background:#fff;border-top:1px solid #9a9a9a;border-bottom:1px solid #9a9a9a;border-left:1px solid #bbb"></div>
<div class="a" style="left:1467px;top:552px;width:18px;height:349px;background:#f4f4f4;"></div>
<svg class="a" style="left:1471px;top:558px" width="10" height="7" viewBox="0 0 10 7"><path d="M1,6 L5,2 L9,6" stroke="#555" stroke-width="1.2" fill="none"/></svg>
<div class="a" style="left:1469px;top:850px;width:15px;height:16.5px;background:#cdcdcd;"></div>
<svg class="a" style="left:1471px;top:888px" width="10" height="7" viewBox="0 0 10 7"><path d="M1,1 L5,5 L9,1" stroke="#555" stroke-width="1.2" fill="none"/></svg>
<div class="a" style="left:914px;top:552px;width:552px;height:6px;overflow:hidden">
<div class="a nw m" style="left:3.5px;top:-8px;font-size:11.7px;color:#111"><span style="color:#1a1ab0">In [<b>116</b>]:</span> new_sco[new_sco.mid &gt;= <span style="color:#b05a10">50</span>]</div>
</div>
<div class="a nw m" style="left:917.5px;top:560.50px;font-size:11.7px;color:#111"><span style="color:#1a1ab0">     ...:</span></div>
<div class="a nw m" style="left:917.5px;top:576.10px;font-size:11.7px;color:#111"><span style="color:#b01818">Out[<b>116</b>]:</span></div>
<div class="a nw m" style="left:917.5px;top:591.70px;font-size:11.7px;color:#111">          mid  final  project  score_exam  score_etc  score_total</div>
<div class="a nw m" style="left:917.5px;top:607.30px;font-size:11.7px;color:#111">name</div>
<div class="a nw m" style="left:917.5px;top:622.90px;font-size:11.7px;color:#111">Cynthia  50.5   43.0     67.0      0.2805      0.268        54.85</div>
<div class="a nw m" style="left:917.5px;top:638.50px;font-size:11.7px;color:#111">Kyra     52.0   18.0     57.5      0.2100      0.230        44.00</div>
<div class="a nw m" style="left:917.5px;top:654.10px;font-size:11.7px;color:#111">Martha   53.0   65.5     59.0      0.3555      0.236        59.15</div>
<div class="a nw m" style="left:917.5px;top:669.70px;font-size:11.7px;color:#111">Guara    54.0   53.0     58.5      0.3210      0.234        55.50</div>
<div class="a nw m" style="left:917.5px;top:685.30px;font-size:11.7px;color:#111">Eliana   53.0   43.0     70.0      0.2880      0.280        56.80</div>
<div class="a nw m" style="left:917.5px;top:700.90px;font-size:11.7px;color:#111">Erica    52.0   45.0     72.0      0.2910      0.288        57.90</div>
<div class="a nw m" style="left:917.5px;top:716.50px;font-size:11.7px;color:#111">Haisley  53.0   45.5      0.0      0.2955      0.000        29.55</div>
<div class="a nw m" style="left:917.5px;top:732.10px;font-size:11.7px;color:#111">Isabel   51.5   60.0     60.0      0.3345      0.240        57.45</div>
<div class="a nw m" style="left:917.5px;top:747.70px;font-size:11.7px;color:#111">Joanna   56.5   60.0     60.0      0.3495      0.240        58.95</div>
<div class="a nw m" style="left:917.5px;top:763.30px;font-size:11.7px;color:#111">Doris    57.0   47.0     55.0      0.3120      0.220        53.20</div>
<div class="a nw m" style="left:917.5px;top:794.50px;font-size:11.7px;color:#111"><span style="color:#1a1ab0">In [<b>117</b>]:</span> new_sco[(new_sco.mid &gt;= <span style="color:#b05a10">50</span>)&amp;(new_sco.final &lt;= <span style="color:#b05a10">20</span>)]</div>
<div class="a nw m" style="left:917.5px;top:810.10px;font-size:11.7px;color:#111"><span style="color:#b01818">Out[<b>117</b>]:</span></div>
<div class="a nw m" style="left:917.5px;top:825.70px;font-size:11.7px;color:#111">       mid  final  project  score_exam  score_etc  score_total</div>
<div class="a nw m" style="left:917.5px;top:841.30px;font-size:11.7px;color:#111">name</div>
<div class="a nw m" style="left:917.5px;top:856.90px;font-size:11.7px;color:#111">Kyra  52.0   18.0     57.5        0.21       0.23         44.0</div>
<div class="a nw m" style="left:917.5px;top:888.10px;font-size:11.7px;color:#111"><span style="color:#1a1ab0">In [<b>118</b>]:</span></div>
<div class="a" style="left:913px;top:902px;width:572px;height:17px;background:#f0f0f0;"></div>
<div class="a" style="left:914px;top:902px;width:108.5px;height:17px;background:#fff;"></div>
<div class="a" style="left:1022.5px;top:903px;width:1px;height:15px;background:#dcdcdc;"></div>
<div class="a" style="left:1106.8px;top:903px;width:1px;height:15px;background:#dcdcdc;"></div>
<div class="a" style="left:1023px;top:917px;width:161px;height:1px;background:#dcdcdc;"></div>
<div class="a nw" style="left:924.5px;top:904px;font-size:11.3px;color:#222;">IPython console</div>
<div class="a nw" style="left:1033px;top:903.5px;font-size:11.3px;color:#222;">File explorer</div>
<div class="a nw" style="left:1119px;top:903.5px;font-size:11.3px;color:#222;">History log</div>
<div class="a nw" style="left:898.5px;top:924px;font-size:11.2px;color:#333;">Permissions:</div>
<div class="a nw" style="left:968px;top:924px;font-size:10.5px;color:#222;font-weight:bold">RW</div>
<div class="a nw" style="left:1008.5px;top:924px;font-size:11.2px;color:#333;">End-of-lines:</div>
<div class="a nw" style="left:1080px;top:924px;font-size:10.5px;color:#222;font-weight:bold">CRLF</div>
<div class="a nw" style="left:1124px;top:924px;font-size:11.2px;color:#333;">Encoding:</div>
<div class="a nw" style="left:1182px;top:924px;font-size:10.5px;color:#222;font-weight:bold">UTF-8</div>
<div class="a nw" style="left:1253.7px;top:924px;font-size:11.2px;color:#333;">Line:</div>
<div class="a nw" style="left:1283.5px;top:924px;font-size:10.5px;color:#222;font-weight:bold">10</div>
<div class="a nw" style="left:1309.6px;top:924px;font-size:11.2px;color:#333;">Column:</div>
<div class="a nw" style="left:1361px;top:924px;font-size:10.5px;color:#222;font-weight:bold">1</div>
<div class="a nw" style="left:1377px;top:924px;font-size:11.2px;color:#333;">Memory:</div>
<div class="a nw" style="left:1431px;top:924px;font-size:10.5px;color:#222;font-weight:bold">23 %</div>
<div class="a" style="left:1004px;top:922px;width:1px;height:16px;background:#dcdcdc;"></div>
<div class="a" style="left:1120px;top:922px;width:1px;height:16px;background:#dcdcdc;"></div>
<div class="a" style="left:1250px;top:922px;width:1px;height:16px;background:#dcdcdc;"></div>
<div class="a" style="left:1372px;top:922px;width:1px;height:16px;background:#dcdcdc;"></div>
<div class="a" style="left:1470px;top:922px;width:1px;height:16px;background:#dcdcdc;"></div>
<svg class="a" style="left:1475px;top:929px" width="9" height="9" viewBox="0 0 9 9"><g fill="#bbb"><rect x="6" y="0" width="2" height="2"/><rect x="3" y="3" width="2" height="2"/><rect x="6" y="3" width="2" height="2"/><rect x="0" y="6" width="2" height="2"/><rect x="3" y="6" width="2" height="2"/><rect x="6" y="6" width="2" height="2"/></g></svg>
<div class="a" style="left:456px;top:282px;width:471px;height:421px;box-shadow:2px 3px 14px 3px rgba(0,0,0,0.16)"></div>
<div class="a" style="left:456px;top:282px;width:471px;height:421px;background:#f0f0f0;border:1px solid #9a9a9a"></div>
<div class="a" style="left:457px;top:283px;width:469px;height:29px;background:#fff;"></div>
<svg class="a" style="left:465px;top:291px" width="14" height="11" viewBox="0 0 14 11"><g fill="none" stroke="#333" stroke-width="1.2"><rect x="0.6" y="0.6" width="12.8" height="9.8"/><path d="M0.6,4 H13.4 M0.6,7.2 H13.4 M4.5,0.6 V10.4 M9,0.6 V10.4"/></g><rect x="0.6" y="0.6" width="12.8" height="3" fill="#333"/></svg>
<div class="a nw" style="left:484px;top:291.5px;font-size:11.6px;color:#111;">sco - DataFrame</div>
<div class="a" style="left:806px;top:296px;width:10px;height:1px;background:#333;"></div>
<div class="a" style="left:851px;top:292px;width:10px;height:10px;background:transparent;border:1px solid #333"></div>
<svg class="a" style="left:897px;top:291px" width="12" height="12" viewBox="0 0 12 12"><path d="M1,1 L11,11 M11,1 L1,11" stroke="#333" stroke-width="1.1"/></svg>
<div class="a" style="left:467px;top:322px;width:449px;height:344px;background:#f0f0f0;border:1px solid #a0a0a0"></div>
<div class="a" style="left:468px;top:323px;width:4px;height:325px;background:#fff;"></div>
<div class="a" style="left:472px;top:324px;width:428px;height:23px;background:#fff;"></div>
<div class="a" style="left:472px;top:323.5px;width:97px;height:1.5px;background:#8a8a8a;"></div>
<div class="a" style="left:470.5px;top:323.5px;width:1.5px;height:325px;background:#c8c8c8;"></div>
<div class="a" style="left:568.5px;top:324px;width:1px;height:23px;background:#e4e4e4;"></div>
<div class="a" style="left:666px;top:324px;width:1px;height:23px;background:#e4e4e4;"></div>
<div class="a" style="left:764px;top:324px;width:1px;height:23px;background:#e4e4e4;"></div>
<div class="a" style="left:862px;top:324px;width:1px;height:23px;background:#e4e4e4;"></div>
<div class="a nw" style="left:506.5px;top:329.2px;font-size:11.6px;color:#222;">Index</div>
<div class="a nw" style="left:608px;top:329.2px;font-size:11.6px;color:#222;">mid</div>
<div class="a nw" style="left:704px;top:329.2px;font-size:11.6px;color:#222;">final</div>
<div class="a nw" style="left:795.5px;top:329.2px;font-size:11.6px;color:#222;">project</div>
<div class="a" style="left:862px;top:324px;width:37px;height:23px;overflow:hidden"><div class="a nw" style="left:18px;top:5.2px;font-size:11.6px;color:#222">score_exam</div></div>
<div class="a" style="left:472px;top:347px;width:428px;height:301px;overflow:hidden;background:#fff">
<div class="a" style="left:0;top:0.0px;width:96.5px;height:28.9px;background:#cbcbcb;border-bottom:1px solid #d8d8d8"></div>
<div class="a" style="left:96.5px;top:0.0px;width:97.5px;height:28.9px;background:#cf94ff;border-left:1px solid #ececf0;border-bottom:1px solid #f0e8f0"></div>
<div class="a nw m" style="left:99.5px;top:9.5px;font-size:10.6px;color:#1a1a1a">44.5</div>
<div class="a" style="left:194px;top:0.0px;width:98px;height:28.9px;background:#ff94ec;border-left:1px solid #ececf0;border-bottom:1px solid #f0e8f0"></div>
<div class="a nw m" style="left:197px;top:9.5px;font-size:10.6px;color:#1a1a1a">27</div>
<div class="a" style="left:292px;top:0.0px;width:98px;height:28.9px;background:#9e94ff;border-left:1px solid #ececf0;border-bottom:1px solid #f0e8f0"></div>
<div class="a nw m" style="left:295px;top:9.5px;font-size:10.6px;color:#1a1a1a">70</div>
<div class="a" style="left:390px;top:0.0px;width:40px;height:28.9px;background:#ea94ff;border-left:1px solid #ececf0;border-bottom:1px solid #f0e8f0"></div>
<div class="a nw m" style="left:393px;top:9.5px;font-size:10.6px;color:#1a1a1a">0.2145</div>
<div class="a nw m" style="left:3px;top:9.5px;font-size:10.6px;color:#1a1a1a">Amelia</div>
<div class="a" style="left:0;top:28.9px;width:96.5px;height:28.9px;background:#cbcbcb;border-bottom:1px solid #d8d8d8"></div>
<div class="a" style="left:96.5px;top:28.9px;width:97.5px;height:28.9px;background:#ff949a;border-left:1px solid #ececf0;border-bottom:1px solid #f0e8f0"></div>
<div class="a nw m" style="left:99.5px;top:38.5px;font-size:10.6px;color:#1a1a1a">8</div>
<div class="a" style="left:194px;top:28.9px;width:98px;height:28.9px;background:#ff949a;border-left:1px solid #ececf0;border-bottom:1px solid #f0e8f0"></div>
<div class="a nw m" style="left:197px;top:38.5px;font-size:10.6px;color:#1a1a1a">0</div>
<div class="a" style="left:292px;top:28.9px;width:98px;height:28.9px;background:#cb94ff;border-left:1px solid #ececf0;border-bottom:1px solid #f0e8f0"></div>
<div class="a nw m" style="left:295px;top:38.5px;font-size:10.6px;color:#1a1a1a">54</div>
<div class="a" style="left:390px;top:28.9px;width:40px;height:28.9px;background:#ff949a;border-left:1px solid #ececf0;border-bottom:1px solid #f0e8f0"></div>
<div class="a nw m" style="left:393px;top:38.5px;font-size:10.6px;color:#1a1a1a">0.024</div>
<div class="a nw m" style="left:3px;top:38.5px;font-size:10.6px;color:#1a1a1a">Avery</div>
<div class="a" style="left:0;top:57.9px;width:96.5px;height:28.9px;background:#cbcbcb;border-bottom:1px solid #d8d8d8"></div>
<div class="a" style="left:96.5px;top:57.9px;width:97.5px;height:28.9px;background:#ff94e8;border-left:1px solid #ececf0;border-bottom:1px solid #f0e8f0"></div>
<div class="a nw m" style="left:99.5px;top:67.4px;font-size:10.6px;color:#1a1a1a">27</div>
<div class="a" style="left:194px;top:57.9px;width:98px;height:28.9px;background:#d594ff;border-left:1px solid #ececf0;border-bottom:1px solid #f0e8f0"></div>
<div class="a nw m" style="left:197px;top:67.4px;font-size:10.6px;color:#1a1a1a">47</div>
<div class="a" style="left:292px;top:57.9px;width:98px;height:28.9px;background:#9498ff;border-left:1px solid #ececf0;border-bottom:1px solid #f0e8f0"></div>
<div class="a nw m" style="left:295px;top:67.4px;font-size:10.6px;color:#1a1a1a">75</div>
<div class="a" style="left:390px;top:57.9px;width:40px;height:28.9px;background:#e594ff;border-left:1px solid #ececf0;border-bottom:1px solid #f0e8f0"></div>
<div class="a nw m" style="left:393px;top:67.4px;font-size:10.6px;color:#1a1a1a">0.222</div>
<div class="a nw m" style="left:3px;top:67.4px;font-size:10.6px;color:#1a1a1a">Adela</div>
<div class="a" style="left:0;top:86.8px;width:96.5px;height:28.9px;background:#cbcbcb;border-bottom:1px solid #d8d8d8"></div>
<div class="a" style="left:96.5px;top:86.8px;width:97.5px;height:28.9px;background:#fe94ff;border-left:1px solid #ececf0;border-bottom:1px solid #f0e8f0"></div>
<div class="a nw m" style="left:99.5px;top:96.3px;font-size:10.6px;color:#1a1a1a">33</div>
<div class="a" style="left:194px;top:86.8px;width:98px;height:28.9px;background:#e094ff;border-left:1px solid #ececf0;border-bottom:1px solid #f0e8f0"></div>
<div class="a nw m" style="left:197px;top:96.3px;font-size:10.6px;color:#1a1a1a">43.5</div>
<div class="a" style="left:292px;top:86.8px;width:98px;height:28.9px;background:#ba94ff;border-left:1px solid #ececf0;border-bottom:1px solid #f0e8f0"></div>
<div class="a nw m" style="left:295px;top:96.3px;font-size:10.6px;color:#1a1a1a">60</div>
<div class="a" style="left:390px;top:86.8px;width:40px;height:28.9px;background:#e094ff;border-left:1px solid #ececf0;border-bottom:1px solid #f0e8f0"></div>
<div class="a nw m" style="left:393px;top:96.3px;font-size:10.6px;color:#1a1a1a">0.2295</div>
<div class="a nw m" style="left:3px;top:96.3px;font-size:10.6px;color:#1a1a1a">Adalee</div>
<div class="a" style="left:0;top:115.8px;width:96.5px;height:28.9px;background:#cbcbcb;border-bottom:1px solid #d8d8d8"></div>
<div class="a" style="left:96.5px;top:115.8px;width:97.5px;height:28.9px;background:#e994ff;border-left:1px solid #ececf0;border-bottom:1px solid #f0e8f0"></div>
<div class="a nw m" style="left:99.5px;top:125.3px;font-size:10.6px;color:#1a1a1a">38</div>
<div class="a" style="left:194px;top:115.8px;width:98px;height:28.9px;background:#ff94e3;border-left:1px solid #ececf0;border-bottom:1px solid #f0e8f0"></div>
<div class="a nw m" style="left:197px;top:125.3px;font-size:10.6px;color:#1a1a1a">24</div>
<div class="a" style="left:292px;top:115.8px;width:98px;height:28.9px;background:#9e94ff;border-left:1px solid #ececf0;border-bottom:1px solid #f0e8f0"></div>
<div class="a nw m" style="left:295px;top:125.3px;font-size:10.6px;color:#1a1a1a">70</div>
<div class="a" style="left:390px;top:115.8px;width:40px;height:28.9px;background:#fc94ff;border-left:1px solid #ececf0;border-bottom:1px solid #f0e8f0"></div>
<div class="a nw m" style="left:393px;top:125.3px;font-size:10.6px;color:#1a1a1a">0.186</div>
<div class="a nw m" style="left:3px;top:125.3px;font-size:10.6px;color:#1a1a1a">Bibiane</div>
<div class="a" style="left:0;top:144.8px;width:96.5px;height:28.9px;background:#cbcbcb;border-bottom:1px solid #d8d8d8"></div>
<div class="a" style="left:96.5px;top:144.8px;width:97.5px;height:28.9px;background:#ff94da;border-left:1px solid #ececf0;border-bottom:1px solid #f0e8f0"></div>
<div class="a nw m" style="left:99.5px;top:154.2px;font-size:10.6px;color:#1a1a1a">23.5</div>
<div class="a" style="left:194px;top:144.8px;width:98px;height:28.9px;background:#ff94a3;border-left:1px solid #ececf0;border-bottom:1px solid #f0e8f0"></div>
<div class="a nw m" style="left:197px;top:154.2px;font-size:10.6px;color:#1a1a1a">3</div>
<div class="a" style="left:292px;top:144.8px;width:98px;height:28.9px;background:#a894ff;border-left:1px solid #ececf0;border-bottom:1px solid #f0e8f0"></div>
<div class="a nw m" style="left:295px;top:154.2px;font-size:10.6px;color:#1a1a1a">66.5</div>
<div class="a" style="left:390px;top:144.8px;width:40px;height:28.9px;background:#ff94be;border-left:1px solid #ececf0;border-bottom:1px solid #f0e8f0"></div>
<div class="a nw m" style="left:393px;top:154.2px;font-size:10.6px;color:#1a1a1a">0.0795</div>
<div class="a nw m" style="left:3px;top:154.2px;font-size:10.6px;color:#1a1a1a">Bianca</div>
<div class="a" style="left:0;top:173.7px;width:96.5px;height:28.9px;background:#cbcbcb;border-bottom:1px solid #d8d8d8"></div>
<div class="a" style="left:96.5px;top:173.7px;width:97.5px;height:28.9px;background:#ff94a7;border-left:1px solid #ececf0;border-bottom:1px solid #f0e8f0"></div>
<div class="a nw m" style="left:99.5px;top:183.2px;font-size:10.6px;color:#1a1a1a">11</div>
<div class="a" style="left:194px;top:173.7px;width:98px;height:28.9px;background:#ff94a0;border-left:1px solid #ececf0;border-bottom:1px solid #f0e8f0"></div>
<div class="a nw m" style="left:197px;top:183.2px;font-size:10.6px;color:#1a1a1a">2</div>
<div class="a" style="left:292px;top:173.7px;width:98px;height:28.9px;background:#9498ff;border-left:1px solid #ececf0;border-bottom:1px solid #f0e8f0"></div>
<div class="a nw m" style="left:295px;top:183.2px;font-size:10.6px;color:#1a1a1a">75</div>
<div class="a" style="left:390px;top:173.7px;width:40px;height:28.9px;background:#ff94a4;border-left:1px solid #ececf0;border-bottom:1px solid #f0e8f0"></div>
<div class="a nw m" style="left:393px;top:183.2px;font-size:10.6px;color:#1a1a1a">0.039</div>
<div class="a nw m" style="left:3px;top:183.2px;font-size:10.6px;color:#1a1a1a">Bonita</div>
<div class="a" style="left:0;top:202.7px;width:96.5px;height:28.9px;background:#cbcbcb;border-bottom:1px solid #d8d8d8"></div>
<div class="a" style="left:96.5px;top:202.7px;width:97.5px;height:28.9px;background:#ff94d7;border-left:1px solid #ececf0;border-bottom:1px solid #f0e8f0"></div>
<div class="a nw m" style="left:99.5px;top:212.2px;font-size:10.6px;color:#1a1a1a">23</div>
<div class="a" style="left:194px;top:202.7px;width:98px;height:28.9px;background:#ff94e0;border-left:1px solid #ececf0;border-bottom:1px solid #f0e8f0"></div>
<div class="a nw m" style="left:197px;top:212.2px;font-size:10.6px;color:#1a1a1a">23</div>
<div class="a" style="left:292px;top:202.7px;width:98px;height:28.9px;background:#a694ff;border-left:1px solid #ececf0;border-bottom:1px solid #f0e8f0"></div>
<div class="a nw m" style="left:295px;top:212.2px;font-size:10.6px;color:#1a1a1a">67</div>
<div class="a" style="left:390px;top:202.7px;width:40px;height:28.9px;background:#ff94e3;border-left:1px solid #ececf0;border-bottom:1px solid #f0e8f0"></div>
<div class="a nw m" style="left:393px;top:212.2px;font-size:10.6px;color:#1a1a1a">0.138</div>
<div class="a nw m" style="left:3px;top:212.2px;font-size:10.6px;color:#1a1a1a">Luna</div>
<div class="a" style="left:0;top:231.6px;width:96.5px;height:28.9px;background:#cbcbcb;border-bottom:1px solid #d8d8d8"></div>
<div class="a" style="left:96.5px;top:231.6px;width:97.5px;height:28.9px;background:#d794ff;border-left:1px solid #ececf0;border-bottom:1px solid #f0e8f0"></div>
<div class="a nw m" style="left:99.5px;top:241.1px;font-size:10.6px;color:#1a1a1a">42.5</div>
<div class="a" style="left:194px;top:231.6px;width:98px;height:28.9px;background:#ff949a;border-left:1px solid #ececf0;border-bottom:1px solid #f0e8f0"></div>
<div class="a nw m" style="left:197px;top:241.1px;font-size:10.6px;color:#1a1a1a">0</div>
<div class="a" style="left:292px;top:231.6px;width:98px;height:28.9px;background:#a894ff;border-left:1px solid #ececf0;border-bottom:1px solid #f0e8f0"></div>
<div class="a nw m" style="left:295px;top:241.1px;font-size:10.6px;color:#1a1a1a">66.5</div>
<div class="a" style="left:390px;top:231.6px;width:40px;height:28.9px;background:#ff94dd;border-left:1px solid #ececf0;border-bottom:1px solid #f0e8f0"></div>
<div class="a nw m" style="left:393px;top:241.1px;font-size:10.6px;color:#1a1a1a">0.1275</div>
<div class="a nw m" style="left:3px;top:241.1px;font-size:10.6px;color:#1a1a1a">Belita</div>
<div class="a" style="left:0;top:260.6px;width:96.5px;height:28.9px;background:#cbcbcb;border-bottom:1px solid #d8d8d8"></div>
<div class="a" style="left:96.5px;top:260.6px;width:97.5px;height:28.9px;background:#ff949e;border-left:1px solid #ececf0;border-bottom:1px solid #f0e8f0"></div>
<div class="a nw m" style="left:99.5px;top:270.1px;font-size:10.6px;color:#1a1a1a">9</div>
<div class="a" style="left:194px;top:260.6px;width:98px;height:28.9px;background:#ff94c5;border-left:1px solid #ececf0;border-bottom:1px solid #f0e8f0"></div>
<div class="a nw m" style="left:197px;top:270.1px;font-size:10.6px;color:#1a1a1a">14</div>
<div class="a" style="left:292px;top:260.6px;width:98px;height:28.9px;background:#a894ff;border-left:1px solid #ececf0;border-bottom:1px solid #f0e8f0"></div>
<div class="a nw m" style="left:295px;top:270.1px;font-size:10.6px;color:#1a1a1a">66.5</div>
<div class="a" style="left:390px;top:260.6px;width:40px;height:28.9px;background:#ff94b7;border-left:1px solid #ececf0;border-bottom:1px solid #f0e8f0"></div>
<div class="a nw m" style="left:393px;top:270.1px;font-size:10.6px;color:#1a1a1a">0.069</div>
<div class="a nw m" style="left:3px;top:270.1px;font-size:10.6px;color:#1a1a1a">Charlotte</div>
<div class="a" style="left:0;top:289.5px;width:96.5px;height:28.9px;background:#cbcbcb;border-bottom:1px solid #d8d8d8"></div>
<div class="a" style="left:96.5px;top:289.5px;width:97.5px;height:28.9px;background:#b694ff;border-left:1px solid #ececf0;border-bottom:1px solid #f0e8f0"></div>
<div class="a nw m" style="left:99.5px;top:299.0px;font-size:10.6px;color:#1a1a1a">50.5</div>
<div class="a" style="left:194px;top:289.5px;width:98px;height:28.9px;background:#e194ff;border-left:1px solid #ececf0;border-bottom:1px solid #f0e8f0"></div>
<div class="a nw m" style="left:197px;top:299.0px;font-size:10.6px;color:#1a1a1a">43</div>
<div class="a" style="left:292px;top:289.5px;width:98px;height:28.9px;background:#a694ff;border-left:1px solid #ececf0;border-bottom:1px solid #f0e8f0"></div>
<div class="a nw m" style="left:295px;top:299.0px;font-size:10.6px;color:#1a1a1a">67</div>
<div class="a" style="left:390px;top:289.5px;width:40px;height:28.9px;background:#c094ff;border-left:1px solid #ececf0;border-bottom:1px solid #f0e8f0"></div>
<div class="a nw m" style="left:393px;top:299.0px;font-size:10.6px;color:#1a1a1a">0.2805</div>
<div class="a nw m" style="left:3px;top:299.0px;font-size:10.6px;color:#1a1a1a">Cynthia</div>
</div>
<div class="a" style="left:900px;top:324px;width:15px;height:324px;background:#f0f0f0;"></div>
<svg class="a" style="left:903px;top:327px" width="10" height="7" viewBox="0 0 10 7"><path d="M1,6 L5,2 L9,6" stroke="#555" stroke-width="1.2" fill="none"/></svg>
<div class="a" style="left:901px;top:340px;width:13px;height:75px;background:#cdcdcd;"></div>
<svg class="a" style="left:903px;top:637px" width="10" height="7" viewBox="0 0 10 7"><path d="M1,1 L5,5 L9,1" stroke="#555" stroke-width="1.2" fill="none"/></svg>
<div class="a" style="left:468px;top:648px;width:447px;height:17px;background:#f0f0f0;"></div>
<svg class="a" style="left:472px;top:652px" width="7" height="10" viewBox="0 0 7 10"><path d="M6,1 L2,5 L6,9" stroke="#555" stroke-width="1.2" fill="none"/></svg>
<div class="a" style="left:484.5px;top:650px;width:247.5px;height:14px;background:#cdcdcd;"></div>
<svg class="a" style="left:887px;top:652px" width="7" height="10" viewBox="0 0 7 10"><path d="M1,1 L5,5 L1,9" stroke="#555" stroke-width="1.2" fill="none"/></svg>
<div class="a" style="left:468.5px;top:671.7px;width:68px;height:20px;background:#e1e1e1;border:1px solid #adadad;"></div>
<div class="a nw" style="left:485.5px;top:676.3px;font-size:11.6px;color:#111;">Format</div>
<div class="a" style="left:543.5px;top:671.7px;width:69px;height:20px;background:#e1e1e1;border:1px solid #adadad;"></div>
<div class="a nw" style="left:560px;top:676.3px;font-size:11.6px;color:#111;">Resize</div>
<svg class="a" style="left:619px;top:676px" width="12" height="12" viewBox="0 0 12 12"><rect x="0.5" y="0.5" width="11" height="11" fill="#fff" stroke="#333"/><path d="M2.5,6 L5,8.5 L9.5,3" stroke="#333" stroke-width="1.2" fill="none"/></svg>
<div class="a nw" style="left:636.4px;top:676.5px;font-size:11.6px;color:#111;">Backgrour</div>
<svg class="a" style="left:694.7px;top:676px" width="12" height="12" viewBox="0 0 12 12"><rect x="0.5" y="0.5" width="11" height="11" fill="#fff" stroke="#333"/><path d="M2.5,6 L5,8.5 L9.5,3" stroke="#333" stroke-width="1.2" fill="none"/></svg>
<div class="a nw" style="left:712.4px;top:676.5px;font-size:11.6px;color:#111;">Column mi</div>
<div class="a" style="left:771px;top:671.7px;width:68px;height:20px;background:#cccccc;"></div>
<div class="a" style="left:772px;top:673px;width:66px;height:19px;overflow:hidden"><div class="a nw" style="left:-8px;top:4.5px;font-size:11.6px;color:#a0a0a0">Save and Close</div></div>
<div class="a" style="left:846.5px;top:671.7px;width:68.5px;height:20px;background:#e1e1e1;border:2px solid #0078d7"></div>
<div class="a nw" style="left:865.5px;top:676.3px;font-size:11.6px;color:#111;">Close</div>
<svg class="a" style="left:921px;top:445px" width="20" height="10" viewBox="0 0 20 10"><path d="M1,5 L5,1 V3.5 H15 V1 L19,5 L15,9 V6.5 H5 V9 Z" fill="#fff" stroke="#111" stroke-width="0.9"/></svg>
<svg class="a" style="left:1525.5px;top:24.5px" width="11" height="7" viewBox="0 0 11 7"><path d="M1,1 L5.5,5.5 L10,1" stroke="#4a4a5a" stroke-width="1.6" fill="none"/></svg>
<div class="a nw" style="left:1662.4px;top:19.3px;font-size:16px;color:#232333;font-weight:bold">참가자(24)</div>
<div class="a" style="left:1530px;top:61.5px;width:343px;height:31.5px;background:#f0f0f4;border-radius:7px"></div>
<div class="a" style="left:1702px;top:63px;width:170px;height:28px;background:#fff;border-radius:6px;box-shadow:0 1px 2px rgba(0,0,0,0.12)"></div>
<div class="a nw" style="left:1586px;top:72px;font-size:14px;color:#5a5a6e;font-weight:bold">토론자(6)</div>
<div class="a nw" style="left:1753.5px;top:72px;font-size:14px;color:#0e71eb;font-weight:bold">참석자(18)</div>
<div class="a" style="left:1525.3px;top:105.4px;width:354.4px;height:39px;background:#fff;border:1px solid #c4c4d4;border-radius:10px"></div>
<svg class="a" style="left:1539px;top:116px" width="17" height="17" viewBox="0 0 17 17"><circle cx="7" cy="7" r="5.6" fill="none" stroke="#6e6e7e" stroke-width="1.6"/><path d="M11,11 L15.5,15.5" stroke="#6e6e7e" stroke-width="1.7" stroke-linecap="round"/></svg>
<div class="a nw" style="left:1561px;top:116px;font-size:15.3px;color:#7a7a8a;">검색</div>
<div class="a" style="left:1536.8px;top:155.8px;width:33.3px;height:33.6px;background:#22a45a;border-radius:7px"></div>
<div class="a nw" style="left:1545.5px;top:164px;font-size:15px;color:#fff;">김</div>
<div class="a" style="left:1889px;top:148px;width:8px;height:45px;background:#f2f2f6;border-radius:4px"></div>
<div class="a" style="left:1889px;top:148px;width:8px;height:9px;background:#a0a0aa;border-radius:4px"></div>
<div class="a" style="left:1643.2px;top:215px;width:117px;height:28.7px;background:#f1f1f5;border-radius:7px"></div>
<div class="a nw" style="left:1653px;top:221px;font-size:14.6px;color:#b4b4c4;">모든 손 내리기</div>
<div class="a" style="left:1526px;top:262px;width:371px;height:1px;background:#e8e8ee;"></div>
<svg class="a" style="left:1525.5px;top:287.5px" width="11" height="7" viewBox="0 0 11 7"><path d="M1,1 L5.5,5.5 L10,1" stroke="#4a4a5a" stroke-width="1.6" fill="none"/></svg>
<div class="a nw" style="left:1685.4px;top:282px;font-size:15.5px;color:#232333;font-weight:bold">채팅</div>
<div class="a" style="left:1887.5px;top:320px;width:9.5px;height:407px;background:#f2f2f6;"></div>
<div class="a" style="left:1888px;top:693px;width:9px;height:30px;background:#9c9ca6;border-radius:4.5px"></div>
<div class="a nw" style="left:1525.3px;top:329px;font-size:17.7px;color:#2c2c38;">폴트: 오름차순)</div>
<div class="a nw" style="left:1525.3px;top:372.7px;font-size:14.84px;color:#6e6e80">발신자<span style="color:#0e71eb">Maso-TA002</span>수신자<span style="color:#0e71eb">모든 토론자 및 참석자:</span></div>
<div class="a nw" style="left:1525.3px;top:399.7px;font-size:17.7px;color:#2c2c38;">.info() : 데이터의 전체적인 정보 확인</div>
<div class="a nw" style="left:1525.3px;top:433.5px;font-size:17.7px;color:#2c2c38;">.rank() : 데이터의 순위 반환 함수</div>
<div class="a nw" style="left:1525.3px;top:478.7px;font-size:14.84px;color:#6e6e80">발신자<span style="color:#0e71eb">Maso-TA002</span>수신자<span style="color:#0e71eb">모든 토론자 및 참석자:</span></div>
<div class="a nw" style="left:1525.3px;top:505px;font-size:17.7px;color:#2c2c38;">.hist() : 히스토그램 출력 함수</div>
<div class="a nw" style="left:1525.3px;top:550.7px;font-size:14.84px;color:#6e6e80">발신자<span style="color:#0e71eb">Maso-TA002</span>수신자<span style="color:#0e71eb">모든 토론자 및 참석자:</span></div>
<div class="a nw" style="left:1525.3px;top:576.7px;font-size:17.7px;color:#2c2c38;">* 버티컬 바는 Enter 위에 있습니다</div>
<div class="a nw" style="left:1525.6px;top:622px;font-size:14.86px;color:#6e6e80">나로부터 에게 <span style="color:#0e71eb">모든 토론자 및 참석자:</span></div>
<div class="a nw" style="left:1525.3px;top:649px;font-size:17.7px;color:#2c2c38;">A &amp; B : A와 B 모두 만족</div>
<div class="a nw" style="left:1525.3px;top:684px;font-size:17.7px;color:#2c2c38;">A | B : A or B (A 또는 B)</div>
<div class="a" style="left:1501px;top:727px;width:396px;height:1px;background:#e4e4ea;"></div>
<div class="a nw" style="left:1522.6px;top:748px;font-size:14.5px;color:#3a3a4a;">받는 사람:</div>
<div class="a" style="left:1600.2px;top:744.7px;width:171px;height:27.5px;background:#f0f0f4;border-radius:7px"></div>
<div class="a nw" style="left:1609px;top:750px;font-size:14px;color:#232333;">모든 토론자 및 참석자</div>
<svg class="a" style="left:1753px;top:753px" width="11" height="8" viewBox="0 0 11 8"><path d="M1.5,1.5 L5.5,5.5 L9.5,1.5" stroke="#232333" stroke-width="1.9" fill="none"/></svg>
<div class="a" style="left:1852px;top:742.4px;width:29.5px;height:29px;background:#fff;border:1px solid #d8d8e2;border-radius:7px"></div>
<svg class="a" style="left:1859px;top:755px" width="16" height="4" viewBox="0 0 16 4"><circle cx="2.5" cy="2" r="1.3" fill="#555"/><circle cx="8" cy="2" r="1.3" fill="#555"/><circle cx="13.5" cy="2" r="1.3" fill="#555"/></svg>
<div class="a nw" style="left:1522.6px;top:782px;font-size:15.6px;color:#8a8a9a;">여기에 메시지 입력...</div>
<svg class="a" style="left:21px;top:135px" width="23" height="18" viewBox="0 0 23 18"><path d="M5,17 C1.5,17 0.5,14 1,12 C1.5,9.5 3.5,8.5 5,8.5 C5,4 8,1 11.5,1 C15,1 18,4 18,8.5 C19.5,8.5 22,9.5 22,12.5 C22,15 20,17 17.5,17 Z" fill="#d6cbc4"/><circle cx="11.5" cy="10.5" r="3.3" fill="#e00010"/></svg>
<div class="a nw" style="left:63.5px;top:136.5px;font-size:14px;color:#fff;">기록 중...</div>
<svg class="a" style="left:7px;top:947px" width="17" height="17" viewBox="0 0 17 17"><g fill="#fff"><path d="M0,2.4 L7,1.4 V8 H0 Z"/><path d="M8,1.2 L17,0 V8 H8 Z"/><path d="M0,9 H7 V15.6 L0,14.6 Z"/><path d="M8,9 H17 V17 L8,15.8 Z"/></g></svg>
<svg class="a" style="left:42px;top:948px" width="17" height="17" viewBox="0 0 17 17"><circle cx="10.5" cy="6.5" r="5.2" fill="none" stroke="#fff" stroke-width="1.4"/><path d="M7,10 L1,16" stroke="#fff" stroke-width="1.6"/></svg>
<svg class="a" style="left:77px;top:947px" width="17" height="17" viewBox="0 0 17 17"><circle cx="8.5" cy="8.5" r="6.6" fill="none" stroke="#fff" stroke-width="1.8"/></svg>
<svg class="a" style="left:112px;top:948px" width="19" height="16" viewBox="0 0 19 16"><rect x="0.7" y="1.5" width="10" height="13" fill="none" stroke="#fff" stroke-width="1.4"/><path d="M0,0.7 H11 M0,15.3 H11" stroke="#fff" stroke-width="1.4"/><path d="M15.5,0 V16" stroke="#fff" stroke-width="1.4"/><rect x="13.5" y="6" width="4" height="4" fill="#fff"/></svg>
<svg class="a" style="left:151px;top:946px" width="17" height="17" viewBox="0 0 17 17"><path d="M2,10 C2,5 5,2.5 9,2.5 C13,2.5 15.5,5.5 15.5,9.5 H5.5 C5.8,12 7.5,13.5 9.5,13.5 C11.5,13.5 13,12.5 13.5,11.5 H15.5 C14.5,14.5 12,16 9,16 C5,16 2,13.5 2,10 Z M5.6,7.5 H12.5 C12.3,5.8 11,4.8 9,4.8 C7.2,4.8 6,5.8 5.6,7.5 Z" fill="#39b4e8"/><path d="M1,14 C-1,9 6,3 15,1 C17,2 16,4 15,5" stroke="#f4c020" stroke-width="1.3" fill="none"/></svg>
<svg class="a" style="left:187px;top:946px" width="17" height="17" viewBox="0 0 17 17"><circle cx="8.5" cy="8.5" r="8" fill="#1a8ad8"/><path d="M3,11 C3,6 9,4 12.5,7 C14.5,9 13,11.5 10.5,11.5 H6.5 C7,14 11,15 15,13 C13.5,16 9,17.5 5.5,15.5 C3.5,14.5 3,12.5 3,11 Z" fill="#0c5aa6"/><path d="M0.8,8 C1.5,3 5,0.5 9,0.5 C13.5,0.5 16.5,4 16.5,8 C14,5 7,4 3,9 Z" fill="#5ad070"/></svg>
<svg class="a" style="left:223px;top:946px" width="17" height="17" viewBox="0 0 17 17"><circle cx="8.5" cy="8.5" r="8" fill="#db4437"/><path d="M8.5,8.5 L15.4,4.5 A8,8 0 0 1 8.5,16.5 Z" fill="#f4c20d"/><path d="M8.5,8.5 L8.5,16.5 A8,8 0 0 1 1.6,4.5 Z" fill="#0f9d58"/><circle cx="8.5" cy="8.5" r="3.8" fill="#fff"/><circle cx="8.5" cy="8.5" r="3" fill="#4285f4"/></svg>
<svg class="a" style="left:259px;top:947px" width="17" height="16" viewBox="0 0 17 16"><path d="M0,1 H6 L8,3 H17 V15 H0 Z" fill="#f0c040"/><rect x="0" y="5" width="17" height="10" fill="#ffd85a"/><rect x="4" y="10" width="9" height="5" fill="#2a7ad8"/><rect x="6" y="12" width="5" height="3" fill="#ffd85a"/></svg>
<svg class="a" style="left:295px;top:946px" width="17" height="17" viewBox="0 0 17 17"><rect x="0" y="0" width="17" height="17" fill="#c8101a"/><text x="8.5" y="13.5" text-anchor="middle" font-family="Liberation Sans" font-size="13" fill="#fff">64</text></svg>
<svg class="a" style="left:332px;top:947px" width="15" height="14" viewBox="0 0 15 14"><rect x="0.5" y="0.5" width="14" height="13" fill="#8ad0f0" stroke="#4a90c0"/><rect x="2" y="2.5" width="4" height="3" fill="#2060b0"/><rect x="8" y="3" width="5" height="2" fill="#fff"/><rect x="2" y="7" width="11" height="2" fill="#fff"/><rect x="2" y="10" width="11" height="2" fill="#4a90c0"/></svg>
<svg class="a" style="left:368px;top:947px" width="14" height="14" viewBox="0 0 14 14"><g fill="#fff"><circle cx="7" cy="7" r="4.5"/><rect x="5.8" y="0" width="2.4" height="14"/><rect x="0" y="5.8" width="14" height="2.4"/><rect x="5.8" y="0" width="2.4" height="14" transform="rotate(45 7 7)"/><rect x="5.8" y="0" width="2.4" height="14" transform="rotate(-45 7 7)"/></g><circle cx="7" cy="7" r="2.2" fill="#3b1f28"/></svg>
<svg class="a" style="left:403px;top:946px" width="17" height="16" viewBox="0 0 17 16"><rect x="1" y="1" width="15" height="11" fill="#e8eef4" stroke="#bcc" stroke-width="1"/><path d="M2.5,9 L6,5 L9,8 L13,3.5" stroke="#3a7ad8" stroke-width="1.3" fill="none"/><path d="M5,15.5 H12 M8.5,12 V15.5" stroke="#ccc" stroke-width="1.5"/><rect x="0" y="7" width="3" height="7" fill="#d8d8d8"/></svg>
<svg class="a" style="left:439px;top:946px" width="16" height="17" viewBox="0 0 16 17"><path d="M8,0.5 L15.5,4 V12.5 L8,16.5 L0.5,12.5 V4 Z" fill="#1a4a90" stroke="#9cc4f0" stroke-width="1"/><path d="M0.5,4 L8,8 L15.5,4 M8,8 V16.5" stroke="#fff" stroke-width="1.2" fill="none"/></svg>
<div class="a" style="left:466px;top:941px;width:35px;height:31px;background:rgba(255,255,255,0.14);"></div>
<svg class="a" style="left:475px;top:946px" width="17" height="17" viewBox="0 0 17 17"><circle cx="8.5" cy="8.5" r="7.5" fill="none" stroke="#eee" stroke-width="1.6"/><path d="M8.5,1 V16 M1,8.5 H16 M3,3 L14,14 M14,3 L3,14" stroke="#eee" stroke-width="0.8"/><path d="M3,7 L9,5 L8,10 L13,8 L12,12 L6,12 Z" fill="#c8102a"/></svg>
<svg class="a" style="left:511px;top:946px" width="17" height="17" viewBox="0 0 17 17"><circle cx="8.5" cy="8.5" r="8" fill="#db4437"/><path d="M8.5,8.5 L15.4,4.5 A8,8 0 0 1 8.5,16.5 Z" fill="#f4c20d"/><path d="M8.5,8.5 L8.5,16.5 A8,8 0 0 1 1.6,4.5 Z" fill="#0f9d58"/><circle cx="8.5" cy="8.5" r="3.8" fill="#fff"/><circle cx="8.5" cy="8.5" r="3" fill="#4285f4"/></svg>
<svg class="a" style="left:546px;top:946px" width="18" height="17" viewBox="0 0 18 17"><ellipse cx="8" cy="7" rx="8" ry="5" fill="#e05060" transform="rotate(-20 8 7)"/><ellipse cx="8" cy="7" rx="5" ry="2.5" fill="#fff" transform="rotate(-20 8 7)"/><circle cx="10" cy="14" r="2" fill="none" stroke="#2a80c8" stroke-width="1.3"/><circle cx="15" cy="13" r="2" fill="none" stroke="#2a80c8" stroke-width="1.3"/><path d="M7,3 L11,12 M13,4 L12,11" stroke="#2a80c8" stroke-width="1.2"/></svg>
<svg class="a" style="left:583px;top:946px" width="17" height="17" viewBox="0 0 17 17"><rect x="0" y="0" width="17" height="17" rx="5" fill="#2d8cff"/><rect x="3" y="5.5" width="7.5" height="6" rx="1.2" fill="#fff"/><path d="M11,8.5 L14.5,6 V11 Z" fill="#fff"/></svg>
<div class="a" style="left:466px;top:967px;width:35px;height:3px;background:#76b9ed;"></div>
<div class="a" style="left:506px;top:967px;width:27px;height:3px;background:#76b9ed;"></div>
<div class="a" style="left:542px;top:967px;width:27px;height:3px;background:#76b9ed;"></div>
<div class="a" style="left:578px;top:967px;width:27px;height:3px;background:#76b9ed;"></div>
<svg class="a" style="left:1047px;top:944px" width="24" height="24" viewBox="0 0 24 24"><circle cx="11.5" cy="11.5" r="11" fill="#fff"/><circle cx="11.5" cy="11.5" r="9.2" fill="#1a90e0"/><text x="11.5" y="17" text-anchor="middle" font-family="Liberation Sans" font-weight="bold" font-size="15" fill="#fff">?</text><circle cx="18.5" cy="18.5" r="4" fill="#1a70c0" stroke="#fff" stroke-width="1"/><rect x="18" y="16.5" width="1.2" height="4" fill="#fff"/></svg>
<svg class="a" style="left:1083px;top:950px" width="15" height="9" viewBox="0 0 15 9"><path d="M1,8 L7.5,1.5 L14,8" stroke="#fff" stroke-width="1.4" fill="none"/></svg>
<svg class="a" style="left:1115px;top:947px" width="14" height="16" viewBox="0 0 14 16"><rect x="1" y="4" width="9" height="8" rx="1.5" fill="none" stroke="#ccc" stroke-width="1.2"/><path d="M10,6 L13,4 V12 L10,10" stroke="#ccc" stroke-width="1.2" fill="none"/><path d="M3,1 H8 M3,15 H8" stroke="#ccc" stroke-width="1"/></svg>
<svg class="a" style="left:1147px;top:946px" width="10" height="18" viewBox="0 0 10 18"><rect x="2" y="0" width="6" height="12" rx="3" fill="#fff"/><path d="M0.8,8 C0.8,12 3,13.5 5,13.5 C7,13.5 9.2,12 9.2,8 M5,13.5 V17 M2,17 H8" stroke="#fff" stroke-width="1.2" fill="none"/></svg>
<svg class="a" style="left:1174px;top:949px" width="19" height="12" viewBox="0 0 19 12"><rect x="2" y="2.5" width="15" height="8" fill="none" stroke="#fff" stroke-width="1.3"/><rect x="3.5" y="4" width="12" height="5" fill="#fff"/><rect x="17" y="5" width="2" height="3" fill="#fff"/><path d="M0,0 L3,3" stroke="#fff" stroke-width="1.2"/></svg>
<svg class="a" style="left:1208px;top:947px" width="15" height="15" viewBox="0 0 15 15"><path d="M1,14 A13,13 0 0 1 14,1 M3.5,14 A10.5,10.5 0 0 1 14,3.5 M6,14 A8,8 0 0 1 14,6 M8.5,14 A5.5,5.5 0 0 1 14,8.5" stroke="#fff" stroke-width="1" fill="none"/><circle cx="13" cy="13" r="1.6" fill="#fff"/></svg>
<svg class="a" style="left:1238px;top:948px" width="16" height="14" viewBox="0 0 16 14"><path d="M1,4.5 H4 L8,1 V13 L4,9.5 H1 Z" fill="none" stroke="#fff" stroke-width="1.1"/><path d="M10.5,4.5 L15,9.5 M15,4.5 L10.5,9.5" stroke="#fff" stroke-width="1.1"/></svg>
<svg class="a" style="left:1270px;top:946px" width="18" height="18" viewBox="0 0 18 18"><path d="M2,16 L4,10 L12,2 C13,1 15,1 16,2 C17,3 17,5 16,6 L8,14 Z" fill="none" stroke="#fff" stroke-width="1.2"/><path d="M1,17 C3,15 5,16 7,15" stroke="#fff" stroke-width="1" fill="none"/></svg>
<svg class="a" style="left:1297px;top:948px" width="25" height="14" viewBox="0 0 25 14"><rect x="0.6" y="0.6" width="23.8" height="12.8" fill="none" stroke="#fff" stroke-width="1.2"/><g fill="#fff"><rect x="3" y="3" width="2" height="1.5"/><rect x="6.5" y="3" width="2" height="1.5"/><rect x="10" y="3" width="2" height="1.5"/><rect x="13.5" y="3" width="2" height="1.5"/><rect x="17" y="3" width="2" height="1.5"/><rect x="20" y="3" width="2" height="1.5"/><rect x="3" y="6" width="2" height="1.5"/><rect x="6.5" y="6" width="2" height="1.5"/><rect x="10" y="6" width="2" height="1.5"/><rect x="13.5" y="6" width="2" height="1.5"/><rect x="17" y="6" width="2" height="1.5"/><rect x="20" y="6" width="2" height="1.5"/><rect x="6" y="9.5" width="13" height="1.5"/></g></svg>
<svg class="a" style="left:1328px;top:947px" width="15" height="15" viewBox="0 0 15 15"><circle cx="7.5" cy="7.5" r="7.2" fill="#b8b8b8"/><path d="M4.5,4.5 L10.5,10.5 M10.5,4.5 L4.5,10.5" stroke="#3a3a3a" stroke-width="1.6"/></svg>
<div class="a" style="left:1356px;top:946px;width:16px;height:17px;background:#fff;"></div>
<div class="a nw" style="left:1357.5px;top:948.5px;font-size:13px;color:#000;">한</div>
<div class="a nw" style="left:1392px;top:949px;font-size:12px;color:#fff;">오후 4:02</div>
<svg class="a" style="left:1465px;top:946px" width="15" height="17" viewBox="0 0 15 17"><path d="M0.6,0.6 H14.4 V12.4 H9 L7.5,14.5 L6,12.4 H0.6 Z" fill="#fff"/><path d="M3,4 H12 M3,6.5 H12 M3,9 H12" stroke="#3a3a3a" stroke-width="1"/></svg>
<div class="a" style="left:1497px;top:940px;width:1px;height:32px;background:#6a7a80;"></div></body></html>
